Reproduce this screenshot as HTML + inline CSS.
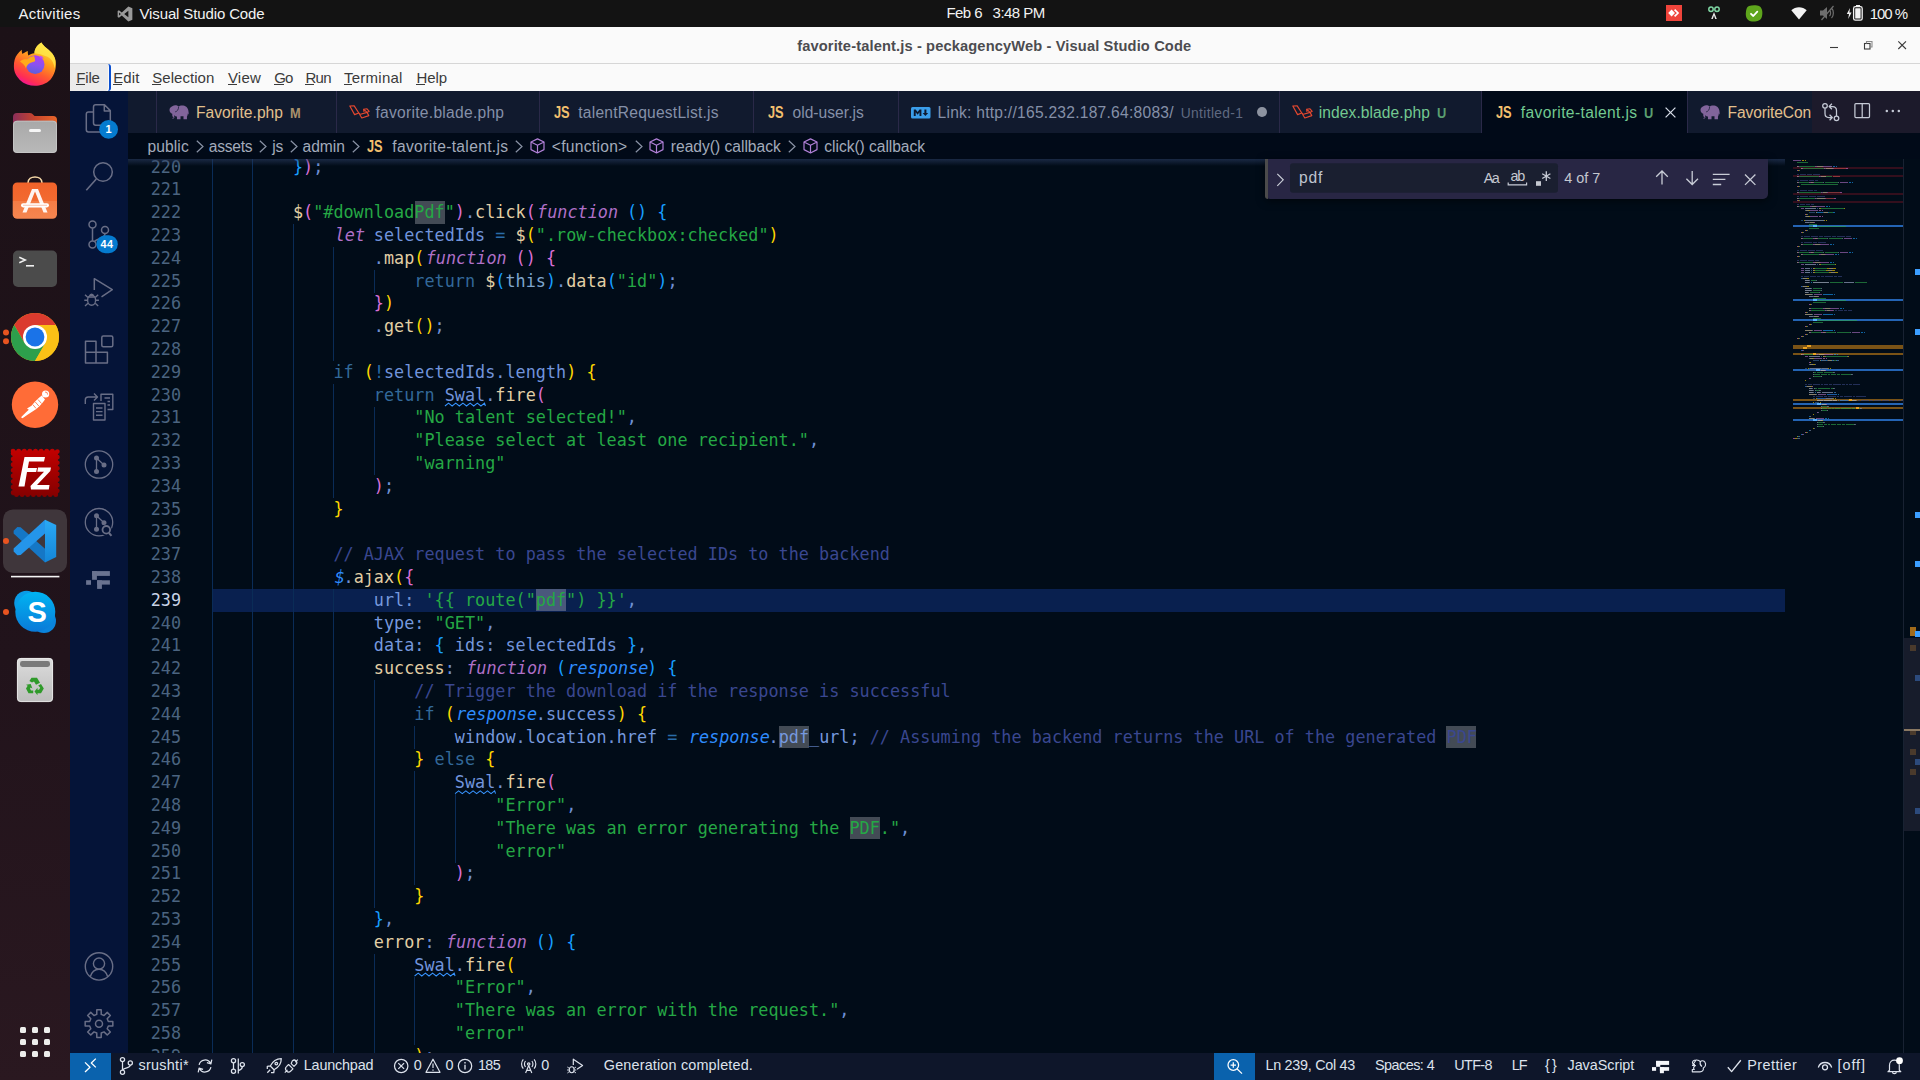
<!DOCTYPE html>
<html lang="en"><head><meta charset="utf-8"><title>favorite-talent.js - peckagencyWeb - Visual Studio Code</title>
<style>
html,body{margin:0;padding:0;background:#010a18;}
body{width:1920px;height:1080px;position:relative;overflow:hidden;font-family:"Liberation Sans",sans-serif;}
.t{position:absolute;white-space:pre;line-height:1;}
.ls{font-family:"Liberation Sans",sans-serif}
.dv{font-family:"DejaVu Sans",sans-serif}
.dm{font-family:"DejaVu Sans Mono",monospace}
svg{display:block;overflow:visible}

.ed{position:absolute;left:128px;top:159px;width:1792px;height:894px;overflow:hidden;background:#010c18}
.ln,.cl{position:absolute;height:22.8px;line-height:22.8px;font-family:"DejaVu Sans Mono",monospace;font-size:16.8px;white-space:pre}
.ln{left:0;width:53px;text-align:right;color:#4b6480}
.cl{left:83.95px;color:#7194dc;letter-spacing:0.0157px}
.k{color:#b070c8;font-style:italic;position:relative;left:1.3px}.c{color:#3a4790}.s{color:#25a845}.q{color:#25a845}.f{color:#e2cfa5}.r{color:#33699a}
.p{color:#6f90d4}.o{color:#2a6ca8}.v{color:#7194dc}.t{}.pa{color:#2f8cff;font-style:italic;position:relative;left:1.3px}.th{color:#7fa6cf}.w{color:#7699de}
.b1{color:#ffd700}.b2{color:#da70d6}.b3{color:#179fff}
.g{position:absolute;width:1px;background:#0a2c57}
.hl{position:absolute;height:22.8px}
</style></head>
<body>
<!-- p1_frame -->
<div style="position:absolute;left:0px;top:0px;width:1920px;height:27px;background:#131313;"></div>
<span id="t1" class="t ls" style="left:18.40px;top:6.00px;font-size:15px;color:#f2f2f2;letter-spacing:0.291px;">Activities</span>
<svg style="position:absolute;left:117px;top:5.5px" width="16" height="16" viewBox="0 0 100 100"><path fill="#9a9a9a" d="M71 3 L96 14 V86 L71 97 L30 59 L12 73 L4 69 V31 L12 27 L30 41 Z M71 30 L45 50 L71 70 Z M13 40 V60 L24 50 Z"/></svg>
<span id="t2" class="t ls" style="left:139.50px;top:6.00px;font-size:15px;color:#f2f2f2;letter-spacing:-0.128px;">Visual Studio Code</span>
<span id="t3" class="t ls" style="left:946.40px;top:5.00px;font-size:15px;color:#f2f2f2;letter-spacing:-0.532px;">Feb 6</span>
<span id="t4" class="t ls" style="left:992.60px;top:5.00px;font-size:15px;color:#f2f2f2;letter-spacing:-0.539px;">3:48 PM</span>
<svg style="position:absolute;left:1666px;top:5px" width="16" height="16" viewBox="0 0 16 16"><rect width="16" height="16" fill="#ef443b"/><path fill="#fff" d="M5.6 4.6 L9 8 L5.6 11.4 L2.2 8 Z"/><path fill="none" stroke="#fff" stroke-width="1.7" d="M8.6 4.6 L12 8 L8.6 11.4"/></svg>
<svg style="position:absolute;left:1706px;top:5px" width="16" height="16" viewBox="0 0 16 16"><circle cx="5" cy="4.3" r="2.2" fill="none" stroke="#7fd6a3" stroke-width="1.5"/><circle cx="11" cy="4.3" r="2.2" fill="none" stroke="#7fd6a3" stroke-width="1.5"/><path d="M8 7 L5.2 14 L6.8 14 L8 10.5 L9.2 14 L10.8 14 Z" fill="#e8e8e8"/></svg>
<svg style="position:absolute;left:1745px;top:4.5px" width="18" height="17" viewBox="0 0 18 17"><path fill="#5ea51c" d="M4 1 C7 0 12 0 14.5 1.2 C17.5 3 18 8 16.8 12 C15.5 16 11 17 7 16.5 C3 16 0.5 13 0.8 8.5 C1 5 1.5 2 4 1 Z"/><path fill="none" stroke="#fff" stroke-width="1.8" stroke-linecap="round" stroke-linejoin="round" d="M6 8.8 L8.3 11 L12.3 6.6"/></svg>
<svg style="position:absolute;left:1791px;top:6px" width="16" height="14" viewBox="0 0 16 14"><path fill="#f2f2f2" d="M8 13.5 L0.3 4.2 C4.5 0.2 11.5 0.2 15.7 4.2 Z"/></svg>
<svg style="position:absolute;left:1819px;top:5px" width="17" height="16" viewBox="0 0 17 16"><path fill="#6e6e6e" d="M1 5.5 H4 L8 2 V14 L4 10.5 H1 Z"/><path fill="none" stroke="#6e6e6e" stroke-width="1.2" d="M10.5 5 C12 6.5 12 9.5 10.5 11 M12.5 3 C15 5.5 15 10.5 12.5 13 M14.5 1 L2.5 15"/></svg>
<svg style="position:absolute;left:1846px;top:4px" width="18" height="18" viewBox="0 0 18 18"><path fill="#f2f2f2" d="M4 4 L0.8 10 H3 L2.2 15 L5.6 8.6 H3.4 Z"/><rect x="7.6" y="2.6" width="8.6" height="13.6" rx="1.8" fill="none" stroke="#f2f2f2" stroke-width="1.3"/><rect x="10" y="1" width="4" height="2" fill="#f2f2f2"/><rect x="9.2" y="4.2" width="5.4" height="10.4" rx="0.6" fill="#f2f2f2"/></svg>
<span id="t5" class="t ls" style="left:1869.70px;top:6.00px;font-size:15px;color:#f2f2f2;letter-spacing:-1.009px;">100 %</span>
<div style="position:absolute;left:0px;top:27px;width:70px;height:1053px;background:linear-gradient(180deg,#1c1117 0%,#21131b 60%,#2a1820 100%);"></div>
<div style="position:absolute;left:70px;top:27px;width:1850px;height:37px;background:#fafafa;border-bottom:1px solid #d6d6d6;box-sizing:border-box;"></div>
<span id="t6" class="t ls" style="left:797.20px;top:38.66px;font-size:14.67px;color:#4c4c50;font-weight:700;letter-spacing:0.127px;">favorite-talent.js - peckagencyWeb - Visual Studio Code</span>
<svg style="position:absolute;left:1826px;top:37px" width="90" height="18" viewBox="0 0 90 18"><g stroke="#3a3a3a" stroke-width="1.1" fill="none"><path d="M4 10.5 H12"/><rect x="38.5" y="6.5" width="5.5" height="5.5"/><path d="M40.5 6.5 V4.5 H46 V10 H44" stroke="#8a8a8a"/><path d="M72.3 4.3 L80 12 M80 4.3 L72.3 12"/></g></svg>
<div style="position:absolute;left:70px;top:64px;width:1850px;height:27px;background:#fafafa;"></div>
<div style="position:absolute;left:70px;top:64px;width:38px;height:27px;background:#ebebeb;border-radius:0 0 4px 0;"></div>
<div style="position:absolute;left:108px;top:64px;width:3px;height:27px;background:transparent;border-right:2.5px solid #0a4fd0;border-radius:0 6px 6px 0;box-sizing:border-box;"></div>
<span id="t7" class="t ls" style="left:76.30px;top:70.00px;font-size:15px;color:#3b3b3b;letter-spacing:-0.168px;">File</span>
<div style="position:absolute;left:76px;top:84px;width:8.6px;height:1px;background:#3b3b3b;"></div>
<span id="t8" class="t ls" style="left:113.30px;top:70.00px;font-size:15px;color:#3b3b3b;letter-spacing:0.060px;">Edit</span>
<div style="position:absolute;left:113px;top:84px;width:8.6px;height:1px;background:#3b3b3b;"></div>
<span id="t9" class="t ls" style="left:152.30px;top:70.00px;font-size:15px;color:#3b3b3b;letter-spacing:0.042px;">Selection</span>
<div style="position:absolute;left:152px;top:84px;width:8.6px;height:1px;background:#3b3b3b;"></div>
<span id="t10" class="t ls" style="left:227.90px;top:70.00px;font-size:15px;color:#3b3b3b;letter-spacing:0.212px;">View</span>
<div style="position:absolute;left:227.6px;top:84px;width:9.3px;height:1px;background:#3b3b3b;"></div>
<span id="t11" class="t ls" style="left:274.20px;top:70.00px;font-size:15px;color:#3b3b3b;letter-spacing:-0.958px;">Go</span>
<div style="position:absolute;left:273.9px;top:84px;width:10.5px;height:1px;background:#3b3b3b;"></div>
<span id="t12" class="t ls" style="left:305.40px;top:70.00px;font-size:15px;color:#3b3b3b;letter-spacing:-0.710px;">Run</span>
<div style="position:absolute;left:305.1px;top:84px;width:9.3px;height:1px;background:#3b3b3b;"></div>
<span id="t13" class="t ls" style="left:344.00px;top:70.00px;font-size:15px;color:#3b3b3b;letter-spacing:0.252px;">Terminal</span>
<div style="position:absolute;left:343.7px;top:84px;width:8.6px;height:1px;background:#3b3b3b;"></div>
<span id="t14" class="t ls" style="left:416.50px;top:70.00px;font-size:15px;color:#3b3b3b;letter-spacing:-0.065px;">Help</span>
<div style="position:absolute;left:416.2px;top:84px;width:8.6px;height:1px;background:#3b3b3b;"></div>
<!-- p2_dock -->
<svg style="position:absolute;left:0;top:27px" width="70" height="1053" viewBox="0 27 70 1053">
<defs>
<linearGradient id="ffg" x1="0.75" y1="0.1" x2="0.3" y2="1"><stop offset="0" stop-color="#ffe040"/><stop offset="0.3" stop-color="#ffa41c"/><stop offset="0.62" stop-color="#ff5a30"/><stop offset="0.85" stop-color="#ff2d55"/><stop offset="1" stop-color="#f0129a"/></linearGradient>
<linearGradient id="ffp" x1="0.6" y1="0" x2="0.4" y2="1"><stop offset="0" stop-color="#b43cf2"/><stop offset="0.5" stop-color="#8a52f0"/><stop offset="1" stop-color="#5a5fdc"/></linearGradient>
<linearGradient id="fold" x1="0" y1="0" x2="1" y2="0"><stop offset="0" stop-color="#8b2e5a"/><stop offset="0.5" stop-color="#c8452c"/><stop offset="1" stop-color="#e8662a"/></linearGradient>
<linearGradient id="foldg" x1="0" y1="0" x2="0" y2="1"><stop offset="0" stop-color="#a8a8a8"/><stop offset="1" stop-color="#b9b9b9"/></linearGradient>
<linearGradient id="sw" x1="0" y1="0" x2="0" y2="1"><stop offset="0" stop-color="#f1632a"/><stop offset="0.5" stop-color="#f26a30"/><stop offset="0.51" stop-color="#f37c45"/><stop offset="1" stop-color="#f58650"/></linearGradient>
<linearGradient id="fz" x1="0" y1="0" x2="0" y2="1"><stop offset="0" stop-color="#c00000"/><stop offset="1" stop-color="#860000"/></linearGradient>
<linearGradient id="sk" x1="0" y1="0" x2="0" y2="1"><stop offset="0" stop-color="#00b4f2"/><stop offset="1" stop-color="#0a7ad8"/></linearGradient>
<linearGradient id="tr" x1="0" y1="0" x2="0" y2="1"><stop offset="0" stop-color="#dcdcdc"/><stop offset="1" stop-color="#bdbdbd"/></linearGradient>
<linearGradient id="vs1" x1="0" y1="0" x2="0" y2="1"><stop offset="0" stop-color="#2aa9f5"/><stop offset="1" stop-color="#1486d8"/></linearGradient>
</defs>
<g><path fill="url(#ffg)" d="M41.400 42.500 C43 45 44.500 46.500 46.100 47.800 C48 49.300 49.800 50.800 51.100 52.200 C52.500 53.500 53.300 54.800 53.900 56.100 C55 58.200 55.800 60.500 55.800 62.800 C56 65.800 55.800 68.500 55 71.100 C54 74.300 52.600 77.200 50.600 79.400 C48.500 81.700 45.800 83.400 42.800 84.400 C40.300 85.300 37.600 85.800 35 85.800 C32.300 85.800 29.700 85.300 27.200 84.400 C24.200 83.300 21.500 81.700 19.400 79.400 C17.500 77.400 16 75.200 15 72.800 C14.200 70.700 13.900 68.400 13.900 66.100 C13.900 63.800 14.100 61.500 14.700 59.400 C15.300 57.500 16.100 55.900 17.200 54.400 C18.400 52.700 20 51.100 21.700 49.700 C21.600 51.200 21.900 52.600 22.500 53.900 C23 53.400 23.700 53 24.400 52.800 C25.400 52.100 26.600 51.500 27.800 51.100 C27.600 52.700 27.800 54.200 28.300 55.600 C30 54.300 32.200 53.600 34.400 53.300 C34.300 51.800 34.700 50.300 35.300 48.900 C35.900 47.600 36.800 46.400 37.800 45.300 C38.900 44.200 40.200 43.300 41.400 42.500 Z"/>
<path fill="#ffe94a" opacity="0.80" d="M41.400 42.500 C43 45 44.500 46.500 46.100 47.800 C48 49.300 49.800 50.800 51.100 52.200 C53 54 54.800 57 55.300 60.500 C55.600 63 55.300 66 54.300 68.500 C54.300 64 52.500 60.500 49.500 58 C47 56 43.500 55.500 41 54.500 C38.500 53.800 36 53.600 34.400 53.300 C34.300 51.800 34.700 50.300 35.300 48.900 C35.900 47.600 36.800 46.400 37.800 45.300 C38.900 44.200 40.200 43.300 41.400 42.500 Z"/>
<circle cx="35.200" cy="64.600" r="9.300" fill="url(#ffp)"/>
<path fill="#ffab1a" d="M20 61.300 C21.500 59.600 24.500 59 27.500 59.200 C29.500 57.500 31.500 56.400 34 56 C34.800 57.800 35.300 59.500 35 61.200 C33.500 61.800 31 62.300 29.200 63.500 C27.500 64.600 26.300 66.500 26 68.500 C25.200 66 23.500 64 22 63 C21.300 62.500 20.500 62 20 61.300 Z"/>
<path fill="#c24ff0" d="M39.500 55.500 C41.500 55.800 43 57 43.800 58.800 C42.800 58.200 41.500 58 40.300 58.200 C40.300 57.200 40 56.200 39.500 55.500 Z"/></g>
<g><path fill="url(#fold)" d="M13 117 Q13 113 17 113 H30 Q32 113 33.500 115 L34.500 116 H53 Q57 116 57 120 V140 H13 Z"/><rect x="13" y="120.700" width="44" height="32.300" rx="4" fill="url(#foldg)"/><rect x="13.500" y="121.200" width="43" height="31.300" rx="3.600" fill="none" stroke="#d0d0d0" stroke-width="0.800" opacity="0.700"/><rect x="29" y="129" width="12" height="3" rx="1.500" fill="#f6f6f6"/></g>
<g><path d="M28 183 C28 175 42 175 42 183" fill="none" stroke="#f6d9a8" stroke-width="1.600"/><rect x="12.700" y="182.500" width="44.300" height="36.300" rx="4.500" fill="url(#sw)"/><path fill="#fff" opacity="0.93" d="M32 189 H38 L47.500 212.500 H43.500 L35 191.500 L26.500 212.500 H22.500 Z"/><rect x="21" y="203.200" width="28" height="4.200" rx="2.100" fill="#fff"/><rect x="23" y="204.800" width="24" height="0.800" fill="#f7b59a"/></g>
<g><rect x="13" y="250.600" width="44" height="36.300" rx="5" fill="#4b4b4b"/><path d="M19.300 257.200 L25.300 260 L19.300 262.800" fill="none" stroke="#f0f0f0" stroke-width="1.500"/><rect x="26" y="265" width="8" height="1.600" fill="#f0f0f0"/></g>
<g transform="translate(35 337)"><circle r="24" fill="#fbc116"/><path fill="#db3b2e" d="M-20.780 -12 A24 24 0 0 1 20.780 -12 L0 -12 L-10.400 6 Z"/><path fill="#2d9f4c" d="M-20.780 -12 A24 24 0 0 0 0 24 L10.400 6 L-10.400 6 Z"/><path fill="#fbc116" d="M0 24 A24 24 0 0 0 20.780 -12 L0 -12 L10.400 6 Z"/><circle r="12" fill="#fff"/><circle r="9.400" fill="#1a73e8"/></g>
<circle cx="6" cy="332.400" r="3" fill="#e95420"/><circle cx="6" cy="341.200" r="3" fill="#e95420"/>
<g><circle cx="35" cy="404.700" r="23.200" fill="#ff6c37"/><g fill="#fff"><circle cx="45.600" cy="394" r="3.600"/><path d="M41.800 395.600 L45 399.400 C42 404 38 408 32.500 411.500 L27.500 414.800 L22.500 418.300 L21 417.200 L25.800 412.600 L28.800 409.800 L27 408.600 L31.500 405.800 C34.500 402 38 398.500 41.800 395.600 Z"/></g><path d="M38 399.500 L41.500 403.500 M35.300 402 L38.800 406 M32.800 404.600 L36 408.400" stroke="#ff6c37" stroke-width="0.800"/><path d="M45 392 A2.400 2.400 0 0 1 47.600 394.600" fill="none" stroke="#ff6c37" stroke-width="0.800"/></g>
<g><rect x="13" y="451" width="44.400" height="43.800" fill="none" stroke="url(#fz)" stroke-width="4.600" stroke-dasharray="0.100 5.510" stroke-linecap="round"/><rect x="12.500" y="450.500" width="45.400" height="44.800" fill="url(#fz)"/>
<path fill="#fff" d="M24.500 457 H45 L44 461.500 H29 L27.800 468 H37 L36.200 472 H27 L24.500 486.500 H18.500 Z"/><path fill="#fff" d="M38 467.500 H51 L50.300 471 L37 485 H49.500 L48.800 489.500 H31 L30.500 486 L44 471.800 H37.300 Z"/></g>
<rect x="3" y="509.400" width="64" height="63.500" rx="10" fill="#3f363b"/>
<g><path fill="#1577c6" d="M13.600 530.800 L17.400 527 L20.600 527.200 L45 548.800 L45 562.500 L13.600 533.600 Z"/><path fill="#2495ea" d="M45 519.700 L13.600 548.600 L13.600 551.400 L17.400 555.200 L20.600 555 L45 533.400 Z"/><path fill="url(#vs1)" d="M45 519.700 L56.200 525 V557 L45 562.500 Z"/></g>
<circle cx="6" cy="541" r="3" fill="#e95420"/>
<rect x="11" y="575.800" width="48.400" height="1.600" fill="#f4f4f4"/>
<g><circle cx="26.500" cy="603" r="12.300" fill="#0a9be6"/><circle cx="44" cy="621" r="12" fill="#0a84dc"/><circle cx="35.300" cy="611.800" r="20" fill="url(#sk)"/></g>
<circle cx="6" cy="612" r="3" fill="#e95420"/>
<g><rect x="17" y="658" width="36" height="44" rx="4" fill="url(#tr)"/><rect x="17.400" y="658.400" width="35.200" height="43.200" rx="3.700" fill="none" stroke="#ececec" stroke-width="0.800"/><rect x="20" y="661" width="30" height="6" rx="2.400" fill="#7a7a7a"/>
<g fill="#2f9a2a" transform="translate(35 686)"><path d="M-3.500 -8.300 L2 -8.300 L5 -3.300 L1 -1.200 L-1 -4.600 L-3 -3.400 L-5.600 -5 Z"/><path d="M6 -2 L8.800 2.600 L6 7.300 H2.500 V9.300 L-0.500 5.500 L2.500 1.700 V3.800 H4 L5.200 1.800 L3.200 -0.600 Z" /><path d="M-1.800 7.300 H-6.500 L-9 2.600 L-7.300 -0.300 L-9 -1.300 L-4.300 -2 L-2.600 2.400 L-4.300 1.400 L-5 2.600 L-4 4.400 H-1.800 Z"/></g></g>
<rect x="20" y="1027" width="6" height="6" rx="1.500" fill="#eeeeec"/>
<rect x="20" y="1039" width="6" height="6" rx="1.500" fill="#eeeeec"/>
<rect x="20" y="1051" width="6" height="6" rx="1.500" fill="#eeeeec"/>
<rect x="32" y="1027" width="6" height="6" rx="1.500" fill="#eeeeec"/>
<rect x="32" y="1039" width="6" height="6" rx="1.500" fill="#eeeeec"/>
<rect x="32" y="1051" width="6" height="6" rx="1.500" fill="#eeeeec"/>
<rect x="44" y="1027" width="6" height="6" rx="1.500" fill="#eeeeec"/>
<rect x="44" y="1039" width="6" height="6" rx="1.500" fill="#eeeeec"/>
<rect x="44" y="1051" width="6" height="6" rx="1.500" fill="#eeeeec"/>
</svg>
<span id="t15" class="t ls" style="left:27.40px;top:597.80px;font-size:29px;color:#fff;font-weight:700;">S</span>
<!-- p3_activity -->
<div style="position:absolute;left:70px;top:91px;width:58px;height:962px;background:#051438;"></div>
<svg style="position:absolute;left:70px;top:91px" width="58" height="962" viewBox="70 91 58 962" fill="none" stroke="#696e86" stroke-width="1.5" stroke-linejoin="round">
<path d="M93.500 119.500 V107 Q93.500 104.800 95.700 104.800 H104.500 L110.300 110.600 V123 Q110.300 125.200 108.100 125.200 H95.700 Q93.500 125.200 93.500 123 Z M104.300 105 V111 H110"/>
<path d="M93.500 112 H88.500 Q86.300 112 86.300 114.200 V129.800 Q86.300 132 88.500 132 H100 Q102 132 102.200 130 V125.400"/>
<circle cx="103" cy="172" r="9.300"/><path d="M96.300 179 L86.300 190.300" stroke-width="1.6"/>
<circle cx="92.500" cy="224.600" r="3.500"/><circle cx="105" cy="230" r="3.500"/><circle cx="92.500" cy="244.600" r="3.500"/><path d="M92.500 228.200 V241 M105 233.600 C105 239 97 238 94.500 241.500"/>
<path d="M94.300 290 V278.700 L112.300 289.600 L101.500 296.800"/>
<g stroke-width="1.400"><ellipse cx="91.600" cy="300.300" rx="4" ry="5"/><path d="M88.500 297 H94.700 M87.600 300.300 H84.300 M95.600 300.300 H98.900 M88 297.500 L85 294.800 M95.200 297.500 L98.200 294.800 M88 303.300 L85 306 M95.200 303.300 L98.200 306 M89.500 295.600 Q91.600 293 93.700 295.600"/></g>
<path d="M85.500 341.200 H96 V363 H85.500 Z M85.500 352.300 H107.400 V363 H96 M96 352.300"/><rect x="101.800" y="336" width="11" height="10.800" rx="1.500"/>
<g stroke-width="1.400"><path d="M93.500 403.500 H105 V420 H93.500 Z M96 408 H102.500 M96 411.600 H102.500 M96 415.200 H102.500" /><path d="M101 401 V394.300 H112.800 V409.500 H107.500 M104.500 398 H110 M107.500 401.500 H110 M107.500 405 H110"/><path d="M85.300 404 V400 Q85.300 397 88.300 397 H97 M94 393.500 L97.500 397 L94 400.500"/></g>
<circle cx="99" cy="464.5" r="13.700" stroke-width="1.300"/>
<g fill="#696e86" stroke="none"><circle cx="96.500" cy="458" r="2.500"/><circle cx="96.500" cy="471.5" r="2.500"/><circle cx="104" cy="465" r="2.500"/></g>
<path d="M96.500 458 V471.5 M96.500 458 L104 465" stroke-width="1.300"/>
<circle cx="99" cy="522.2" r="13.700" stroke-width="1.300"/>
<g fill="#696e86" stroke="none"><circle cx="96.500" cy="515.7" r="2.500"/><circle cx="96.500" cy="529.2" r="2.500"/><circle cx="104" cy="522.7" r="2.500"/></g>
<path d="M96.500 515.7 V529.2 M96.500 515.7 L104 522.7" stroke-width="1.300"/>
<circle cx="106.300" cy="530.200" r="5.600" fill="#051438" stroke="none"/><circle cx="106.300" cy="529.800" r="3.800" stroke-width="1.800"/><path d="M109 533 L111.500 535.800" stroke-width="2"/>
<g fill="#6a7390" stroke="none"><rect x="92.100" y="571.100" width="17.800" height="4.800"/><rect x="92.100" y="571.100" width="4.800" height="8.700"/><rect x="86.100" y="580.200" width="4.900" height="4.600"/><rect x="97.100" y="580.300" width="12.800" height="4.300"/><rect x="97.100" y="580.300" width="4.800" height="8.600"/></g>
<circle cx="99" cy="966.400" r="13.700" stroke-width="1.400"/><circle cx="99" cy="963.600" r="5.600" stroke-width="1.400"/><path d="M90.300 976.800 C92 971 96 969.300 99 969.300 C102 969.300 106 971 107.700 976.800" stroke-width="1.400"/>
<path d="M96.81 1009.87 L101.19 1009.87 L101.24 1014.37 L104.02 1015.51 L107.23 1012.37 L110.33 1015.47 L107.19 1018.68 L108.33 1021.46 L112.83 1021.51 L112.83 1025.89 L108.33 1025.94 L107.19 1028.72 L110.33 1031.93 L107.23 1035.03 L104.02 1031.89 L101.24 1033.03 L101.19 1037.53 L96.81 1037.53 L96.76 1033.03 L93.98 1031.89 L90.77 1035.03 L87.67 1031.93 L90.81 1028.72 L89.67 1025.94 L85.17 1025.89 L85.17 1021.51 L89.67 1021.46 L90.81 1018.68 L87.67 1015.47 L90.77 1012.37 L93.98 1015.51 L96.76 1014.37 Z" stroke-width="1.500"/><circle cx="99" cy="1023.700" r="3.500" stroke-width="1.500"/>
<g stroke="none"><circle cx="108.600" cy="129.400" r="9.400" fill="#057bcf"/><rect x="96.400" y="235.200" width="21.400" height="18" rx="9" fill="#057bcf"/></g>
</svg>
<span id="t16" class="t ls" style="left:105.60px;top:123.90px;font-size:11px;color:#fff;font-weight:700;letter-spacing:-0.325px;">1</span>
<span id="t17" class="t ls" style="left:100.60px;top:238.80px;font-size:10.8px;color:#fff;font-weight:700;letter-spacing:0.392px;">44</span>
<!-- p4_tabs -->
<div style="position:absolute;left:128px;top:91px;width:1792px;height:42px;background:#111a2e;"></div>
<div style="position:absolute;left:156px;top:91px;width:1px;height:42px;background:#2a2948;"></div>
<div style="position:absolute;left:336px;top:91px;width:1px;height:42px;background:#2a2948;"></div>
<div style="position:absolute;left:539px;top:91px;width:1px;height:42px;background:#2a2948;"></div>
<div style="position:absolute;left:753px;top:91px;width:1px;height:42px;background:#2a2948;"></div>
<div style="position:absolute;left:898px;top:91px;width:1px;height:42px;background:#2a2948;"></div>
<div style="position:absolute;left:1279px;top:91px;width:1px;height:42px;background:#2a2948;"></div>
<div style="position:absolute;left:1687px;top:91px;width:1px;height:42px;background:#2a2948;"></div>
<div style="position:absolute;left:1482px;top:91px;width:205px;height:42px;background:#010a18;"></div>
<div style="position:absolute;left:1481px;top:91px;width:1px;height:42px;background:#2a2948;"></div>
<svg style="position:absolute;left:168.7px;top:104.6px" width="20" height="14.500" viewBox="0 0 19.600 14.200"><path fill="#82649b" d="M3.200 1.200 C5.500 -0.300 8 0.200 9.300 1.500 C10 1 12 0.300 14 0.600 C17 1 19 3.500 19.200 7 C19.300 8 19.300 9 19 9.200 C18.700 9 18.600 8.600 18.500 8 C18.400 9.500 18 10.500 17.600 11.200 V14 H14.200 V11 H11.300 V14 H7.800 V11.300 C6.800 11.300 5.900 10.800 5.300 10 L4.900 11 C5.300 11.200 5.500 11.800 5.200 12.600 C4.900 13.300 4 13.700 3.300 13.200 L3.600 12.600 C4.100 12.800 4.500 12.500 4.500 12 C4.300 11.600 3.200 11.500 3.200 10 V8.600 C1.500 8 0.500 6.500 0.500 4.800 C0.500 3.300 1.500 2 3.200 1.200 Z M9.200 2.300 C8.800 4.500 7.500 6 5.500 6.500" stroke="#111a2e" stroke-width="0.0"/><path d="M9.400 1.800 C9.400 4.600 8 6.200 6 6.800" fill="none" stroke="#111a2e" stroke-width="0.700"/></svg>
<span id="t18" class="t ls" style="left:196.00px;top:104.70px;font-size:15.6px;color:#e2c08d;letter-spacing:0.026px;">Favorite.php</span>
<span id="t19" class="t ls" style="left:290.20px;top:105.70px;font-size:14.6px;color:#a8916c;font-weight:700;transform:scaleX(0.88);transform-origin:0 0;">M</span>
<svg style="position:absolute;left:348.6px;top:104.6px" width="21" height="14" viewBox="0 0 21 14" fill="none" stroke="#e5482f" stroke-width="1.150" stroke-linejoin="round"><path d="M0.800 1 L5.200 0.900 L9.800 8 L5.600 9.600 Z M5.600 9.600 L9.800 8 L11.200 9.300 M10.700 9.500 L18 7.400 L19.800 10.600 L12.800 13 Z M18 7.400 L14.600 4.200 L18 3.800 L20.200 6.300 L18 7.400 M14.600 4.200 L15 6.800"/></svg>
<span id="t20" class="t ls" style="left:375.50px;top:104.70px;font-size:15.6px;color:#8590a8;letter-spacing:0.268px;">favorite.blade.php</span>
<span id="t21" class="t ls" style="left:554.00px;top:104.00px;font-size:17.2px;color:#f3c06e;font-weight:700;transform:scaleX(0.745);transform-origin:0 0;">JS</span>
<span id="t22" class="t ls" style="left:578.30px;top:104.70px;font-size:15.6px;color:#8590a8;letter-spacing:0.220px;">talentRequestList.js</span>
<span id="t23" class="t ls" style="left:767.70px;top:104.00px;font-size:17.2px;color:#f3c06e;font-weight:700;transform:scaleX(0.745);transform-origin:0 0;">JS</span>
<span id="t24" class="t ls" style="left:792.50px;top:104.70px;font-size:15.6px;color:#8590a8;letter-spacing:0.020px;">old-user.js</span>
<svg style="position:absolute;left:910.700px;top:106.500px" width="19.500" height="11.500" viewBox="0 0 19.500 11.500"><rect width="19.500" height="11.500" rx="1.500" fill="#3b9eea"/><path fill="#0e1a30" d="M2.800 8.900 V2.600 H4.700 L6.600 5 L8.500 2.600 H10.400 V8.900 H8.500 V5.300 L6.600 7.700 L4.700 5.300 V8.900 Z M14.400 9 L11.600 5.900 H13.400 V2.600 H15.400 V5.900 H17.200 Z"/></svg>
<span id="t25" class="t ls" style="left:937.50px;top:104.70px;font-size:15.6px;color:#8590a8;letter-spacing:0.251px;">Link: http://165.232.187.64:8083/</span>
<span id="t26" class="t ls" style="left:1180.80px;top:106.60px;font-size:13.8px;color:#5f6980;letter-spacing:0.344px;">Untitled-1</span>
<div style="position:absolute;left:1257px;top:106.800px;width:9.800px;height:9.800px;border-radius:50%;background:#8d93a0"></div>
<svg style="position:absolute;left:1291.6px;top:104.6px" width="21" height="14" viewBox="0 0 21 14" fill="none" stroke="#e5482f" stroke-width="1.150" stroke-linejoin="round"><path d="M0.800 1 L5.200 0.900 L9.800 8 L5.600 9.600 Z M5.600 9.600 L9.800 8 L11.200 9.300 M10.700 9.500 L18 7.400 L19.800 10.600 L12.800 13 Z M18 7.400 L14.600 4.200 L18 3.800 L20.200 6.300 L18 7.400 M14.600 4.200 L15 6.800"/></svg>
<span id="t27" class="t ls" style="left:1318.80px;top:104.70px;font-size:15.6px;color:#73c991;letter-spacing:0.072px;">index.blade.php</span>
<span id="t28" class="t ls" style="left:1437.40px;top:105.70px;font-size:14.6px;color:#5a9f70;font-weight:700;transform:scaleX(0.88);transform-origin:0 0;">U</span>
<span id="t29" class="t ls" style="left:1496.00px;top:104.00px;font-size:17.2px;color:#f3c06e;font-weight:700;transform:scaleX(0.745);transform-origin:0 0;">JS</span>
<span id="t30" class="t ls" style="left:1520.80px;top:104.70px;font-size:15.6px;color:#73c991;letter-spacing:0.368px;">favorite-talent.js</span>
<span id="t31" class="t ls" style="left:1643.70px;top:105.70px;font-size:14.6px;color:#5a9f70;font-weight:700;transform:scaleX(0.88);transform-origin:0 0;">U</span>
<svg style="position:absolute;left:1665px;top:106.500px" width="11" height="11" viewBox="0 0 11 11" fill="none" stroke="#d8dee9" stroke-width="1.250"><path d="M0.600 0.600 L10.400 10.400 M10.400 0.600 L0.600 10.400"/></svg>
<svg style="position:absolute;left:1699.7px;top:104.6px" width="20" height="14.500" viewBox="0 0 19.600 14.200"><path fill="#82649b" d="M3.200 1.200 C5.500 -0.300 8 0.200 9.300 1.500 C10 1 12 0.300 14 0.600 C17 1 19 3.500 19.200 7 C19.300 8 19.300 9 19 9.200 C18.700 9 18.600 8.600 18.500 8 C18.400 9.500 18 10.500 17.600 11.200 V14 H14.200 V11 H11.300 V14 H7.800 V11.300 C6.800 11.300 5.900 10.800 5.300 10 L4.900 11 C5.300 11.200 5.500 11.800 5.200 12.600 C4.900 13.300 4 13.700 3.300 13.200 L3.600 12.600 C4.100 12.800 4.500 12.500 4.500 12 C4.300 11.600 3.200 11.500 3.200 10 V8.600 C1.500 8 0.500 6.500 0.500 4.800 C0.500 3.300 1.500 2 3.200 1.200 Z M9.200 2.300 C8.800 4.500 7.500 6 5.500 6.500" stroke="#111a2e" stroke-width="0.0"/><path d="M9.400 1.800 C9.400 4.600 8 6.200 6 6.800" fill="none" stroke="#111a2e" stroke-width="0.700"/></svg>
<div style="position:absolute;left:1727.500px;top:91px;width:83.400px;height:42px;overflow:hidden"><span id="t32" class="t ls" style="left:0.00px;top:13.70px;font-size:15.6px;color:#e2c08d;letter-spacing:-0.122px;visibility:hidden;">FavoriteCon</span><span id="t33" class="t ls" style="left:0.00px;top:13.70px;font-size:15.6px;color:#e2c08d;letter-spacing:-0.122px;">FavoriteController.php</span></div>
<div style="position:absolute;left:1812px;top:91px;width:108px;height:42px;background:#1c1a2b;"></div>
<svg style="position:absolute;left:1820px;top:101px" width="84" height="22" viewBox="1820 101 84 22" fill="none" stroke="#c5cad6" stroke-width="1.250" stroke-linejoin="round"><circle cx="1825" cy="105.800" r="2.300"/><circle cx="1836.500" cy="118.300" r="2.300"/><path d="M1825 108.200 V113.500 Q1825 117.500 1829 117.500 H1832 M1829.600 114.800 L1832.300 117.500 L1829.600 120.200"/><path d="M1836.500 116 V110.500 Q1836.500 106.500 1832.500 106.500 H1829.500 M1831.900 103.800 L1829.200 106.500 L1831.900 109.200"/><rect x="1854.900" y="103.600" width="14.600" height="14" rx="1"/><path d="M1862.200 103.600 V117.600"/><g fill="#c5cad6" stroke="none"><circle cx="1886.800" cy="111" r="1.250"/><circle cx="1892.800" cy="111" r="1.250"/><circle cx="1898.800" cy="111" r="1.250"/></g></svg>
<div style="position:absolute;left:128px;top:133px;width:1792px;height:26px;background:#010a18;"></div>
<span id="t34" class="t ls" style="left:147.50px;top:138.70px;font-size:15.6px;color:#a3abbb;letter-spacing:0.092px;">public</span>
<svg style="position:absolute;left:195.8px;top:140.2px" width="8" height="13" viewBox="0 0 8 13" fill="none" stroke="#8a93a6" stroke-width="1.200"><path d="M0.800 0.800 L7 6.500 L0.800 12.200"/></svg>
<span id="t35" class="t ls" style="left:208.80px;top:138.70px;font-size:15.6px;color:#a3abbb;letter-spacing:-0.263px;">assets</span>
<svg style="position:absolute;left:259px;top:140.2px" width="8" height="13" viewBox="0 0 8 13" fill="none" stroke="#8a93a6" stroke-width="1.200"><path d="M0.800 0.800 L7 6.500 L0.800 12.200"/></svg>
<span id="t36" class="t ls" style="left:272.30px;top:138.70px;font-size:15.6px;color:#a3abbb;letter-spacing:-0.283px;">js</span>
<svg style="position:absolute;left:289.6px;top:140.2px" width="8" height="13" viewBox="0 0 8 13" fill="none" stroke="#8a93a6" stroke-width="1.200"><path d="M0.800 0.800 L7 6.500 L0.800 12.200"/></svg>
<span id="t37" class="t ls" style="left:302.50px;top:138.70px;font-size:15.6px;color:#a3abbb;letter-spacing:0.003px;">admin</span>
<svg style="position:absolute;left:352px;top:140.2px" width="8" height="13" viewBox="0 0 8 13" fill="none" stroke="#8a93a6" stroke-width="1.200"><path d="M0.800 0.800 L7 6.500 L0.800 12.200"/></svg>
<span id="t38" class="t ls" style="left:367.00px;top:137.80px;font-size:17.2px;color:#f3c06e;font-weight:700;transform:scaleX(0.745);transform-origin:0 0;">JS</span>
<span id="t39" class="t ls" style="left:392.30px;top:138.70px;font-size:15.6px;color:#a3abbb;letter-spacing:0.340px;">favorite-talent.js</span>
<svg style="position:absolute;left:515.2px;top:140.2px" width="8" height="13" viewBox="0 0 8 13" fill="none" stroke="#8a93a6" stroke-width="1.200"><path d="M0.800 0.800 L7 6.500 L0.800 12.200"/></svg>
<svg style="position:absolute;left:530.3px;top:138px" width="15" height="16" viewBox="0 0 15 16" fill="none" stroke="#b180d7" stroke-width="1.200" stroke-linejoin="round"><path d="M7.500 0.900 L14 4 V11.600 L7.500 15 L1 11.600 V4 Z M1 4 L7.500 7.300 L14 4 M7.500 7.300 V15"/></svg>
<span id="t40" class="t ls" style="left:551.80px;top:138.70px;font-size:15.6px;color:#a3abbb;letter-spacing:0.286px;">&lt;function&gt;</span>
<svg style="position:absolute;left:634.8px;top:140.2px" width="8" height="13" viewBox="0 0 8 13" fill="none" stroke="#8a93a6" stroke-width="1.200"><path d="M0.800 0.800 L7 6.500 L0.800 12.200"/></svg>
<svg style="position:absolute;left:649.3px;top:138px" width="15" height="16" viewBox="0 0 15 16" fill="none" stroke="#b180d7" stroke-width="1.200" stroke-linejoin="round"><path d="M7.500 0.900 L14 4 V11.600 L7.500 15 L1 11.600 V4 Z M1 4 L7.500 7.300 L14 4 M7.500 7.300 V15"/></svg>
<span id="t41" class="t ls" style="left:670.80px;top:138.70px;font-size:15.6px;color:#a3abbb;letter-spacing:-0.004px;">ready() callback</span>
<svg style="position:absolute;left:787.8px;top:140.2px" width="8" height="13" viewBox="0 0 8 13" fill="none" stroke="#8a93a6" stroke-width="1.200"><path d="M0.800 0.800 L7 6.500 L0.800 12.200"/></svg>
<svg style="position:absolute;left:802.8px;top:138px" width="15" height="16" viewBox="0 0 15 16" fill="none" stroke="#b180d7" stroke-width="1.200" stroke-linejoin="round"><path d="M7.500 0.900 L14 4 V11.600 L7.500 15 L1 11.600 V4 Z M1 4 L7.500 7.300 L14 4 M7.500 7.300 V15"/></svg>
<span id="t42" class="t ls" style="left:824.30px;top:138.70px;font-size:15.6px;color:#a3abbb;letter-spacing:-0.042px;">click() callback</span>
<!-- p5_code -->
<div class="ed">
<div class="hl" style="left:84.3px;top:430px;width:1572.7px;background:#09204f"></div>
<div class="hl" style="left:286.69px;top:42.4px;width:30.04px;height:22.4px;background:#434b55"></div>
<div class="hl" style="left:408.06px;top:430px;width:30.04px;height:22.4px;background:#4a587c"></div>
<div class="hl" style="left:650.81px;top:566.8px;width:30.04px;height:22.4px;background:#434b55"></div>
<div class="hl" style="left:1318.37px;top:566.8px;width:30.04px;height:22.4px;background:#434b55"></div>
<div class="hl" style="left:721.61px;top:658px;width:30.04px;height:22.4px;background:#434b55"></div>
<div class="g" style="left:84px;top:-3.2px;height:912px"></div>
<div class="g" style="left:124px;top:-3.2px;height:912px"></div>
<div class="g" style="left:165px;top:65.2px;height:843.6px"></div>
<div class="g" style="left:205px;top:88px;height:114px"></div>
<div class="g" style="left:205px;top:224.8px;height:114px"></div>
<div class="g" style="left:205px;top:430px;height:478.8px"></div>
<div class="g" style="left:246px;top:110.8px;height:22.8px"></div>
<div class="g" style="left:246px;top:247.6px;height:68.4px"></div>
<div class="g" style="left:246px;top:521.2px;height:228px"></div>
<div class="g" style="left:246px;top:794.8px;height:114px"></div>
<div class="g" style="left:286px;top:566.8px;height:22.8px"></div>
<div class="g" style="left:286px;top:612.4px;height:114px"></div>
<div class="g" style="left:286px;top:817.6px;height:68.4px"></div>
<div class="g" style="left:327px;top:635.2px;height:68.4px"></div>
<div class="ln" style="top:-3.2px">220</div>
<div class="cl" style="top:-3.2px">        <span class="b3">}</span><span class="b2">)</span><span class="p">;</span></div>
<div class="ln" style="top:19px">221</div>
<div class="ln" style="top:42.4px">222</div>
<div class="cl" style="top:42.4px">        <span class="f">$</span><span class="b2">(</span><span class="q">"</span><span class="s">#downloadPdf</span><span class="q">"</span><span class="b2">)</span><span class="p">.</span><span class="f">click</span><span class="b2">(</span><span class="k">function</span> <span class="b3">()</span> <span class="b3">{</span></div>
<div class="ln" style="top:65.2px">223</div>
<div class="cl" style="top:65.2px">            <span class="k">let</span> <span class="v">selectedIds</span> <span class="o">=</span> <span class="f">$</span><span class="b1">(</span><span class="q">"</span><span class="s">.row-checkbox:checked</span><span class="q">"</span><span class="b1">)</span></div>
<div class="ln" style="top:88px">224</div>
<div class="cl" style="top:88px">                <span class="p">.</span><span class="f">map</span><span class="b1">(</span><span class="k">function</span> <span class="b2">()</span> <span class="b2">{</span></div>
<div class="ln" style="top:110.8px">225</div>
<div class="cl" style="top:110.8px">                    <span class="r">return</span> <span class="f">$</span><span class="b3">(</span><span class="th">this</span><span class="b3">)</span><span class="p">.</span><span class="f">data</span><span class="b3">(</span><span class="q">"</span><span class="s">id</span><span class="q">"</span><span class="b3">)</span><span class="p">;</span></div>
<div class="ln" style="top:133px">226</div>
<div class="cl" style="top:133px">                <span class="b2">}</span><span class="b1">)</span></div>
<div class="ln" style="top:156.4px">227</div>
<div class="cl" style="top:156.4px">                <span class="p">.</span><span class="f">get</span><span class="b1">()</span><span class="p">;</span></div>
<div class="ln" style="top:179.2px">228</div>
<div class="ln" style="top:202px">229</div>
<div class="cl" style="top:202px">            <span class="r">if</span> <span class="b1">(</span><span class="o">!</span><span class="v">selectedIds</span><span class="p">.</span><span class="v">length</span><span class="b1">)</span> <span class="b1">{</span></div>
<div class="ln" style="top:224.8px">230</div>
<div class="cl" style="top:224.8px">                <span class="r">return</span> <span class="v">Swal</span><span class="p">.</span><span class="f">fire</span><span class="b2">(</span></div>
<div class="ln" style="top:247px">231</div>
<div class="cl" style="top:247px">                    <span class="q">"</span><span class="s">No talent selected!</span><span class="q">"</span><span class="p">,</span></div>
<div class="ln" style="top:270.4px">232</div>
<div class="cl" style="top:270.4px">                    <span class="q">"</span><span class="s">Please select at least one recipient.</span><span class="q">"</span><span class="p">,</span></div>
<div class="ln" style="top:293.2px">233</div>
<div class="cl" style="top:293.2px">                    <span class="q">"</span><span class="s">warning</span><span class="q">"</span></div>
<div class="ln" style="top:316px">234</div>
<div class="cl" style="top:316px">                <span class="b2">)</span><span class="p">;</span></div>
<div class="ln" style="top:338.8px">235</div>
<div class="cl" style="top:338.8px">            <span class="b1">}</span></div>
<div class="ln" style="top:361px">236</div>
<div class="ln" style="top:384.4px">237</div>
<div class="cl" style="top:384.4px">            <span class="c">// AJAX request to pass the selected IDs to the backend</span></div>
<div class="ln" style="top:407.2px">238</div>
<div class="cl" style="top:407.2px">            <span class="pa">$</span><span class="p">.</span><span class="f">ajax</span><span class="b1">(</span><span class="b2">{</span></div>
<div class="ln" style="top:430px;color:#c8d3e6">239</div>
<div class="cl" style="top:430px">                <span class="w">url</span><span class="p">:</span> <span class="q">'</span><span class="s">{{ route("pdf") }}</span><span class="q">'</span><span class="p">,</span></div>
<div class="ln" style="top:452.8px">240</div>
<div class="cl" style="top:452.8px">                <span class="w">type</span><span class="p">:</span> <span class="q">"</span><span class="s">GET</span><span class="q">"</span><span class="p">,</span></div>
<div class="ln" style="top:475px">241</div>
<div class="cl" style="top:475px">                <span class="w">data</span><span class="p">:</span> <span class="b3">{</span> <span class="w">ids</span><span class="p">:</span> <span class="v">selectedIds</span> <span class="b3">}</span><span class="p">,</span></div>
<div class="ln" style="top:498.4px">242</div>
<div class="cl" style="top:498.4px">                <span class="f">success</span><span class="p">:</span> <span class="k">function</span> <span class="b3">(</span><span class="pa">response</span><span class="b3">)</span> <span class="b3">{</span></div>
<div class="ln" style="top:521.2px">243</div>
<div class="cl" style="top:521.2px">                    <span class="c">// Trigger the download if the response is successful</span></div>
<div class="ln" style="top:544px">244</div>
<div class="cl" style="top:544px">                    <span class="r">if</span> <span class="b1">(</span><span class="pa">response</span><span class="p">.</span><span class="v">success</span><span class="b1">)</span> <span class="b1">{</span></div>
<div class="ln" style="top:566.8px">245</div>
<div class="cl" style="top:566.8px">                        <span class="w">window</span><span class="p">.</span><span class="w">location</span><span class="p">.</span><span class="w">href</span> <span class="o">=</span> <span class="pa">response</span><span class="p">.</span><span class="w">pdf_url</span><span class="p">;</span> <span class="c">// Assuming the backend returns the URL of the generated PDF</span></div>
<div class="ln" style="top:589px">246</div>
<div class="cl" style="top:589px">                    <span class="b1">}</span> <span class="r">else</span> <span class="b1">{</span></div>
<div class="ln" style="top:612.4px">247</div>
<div class="cl" style="top:612.4px">                        <span class="v">Swal</span><span class="p">.</span><span class="f">fire</span><span class="b2">(</span></div>
<div class="ln" style="top:635.2px">248</div>
<div class="cl" style="top:635.2px">                            <span class="q">"</span><span class="s">Error</span><span class="q">"</span><span class="p">,</span></div>
<div class="ln" style="top:658px">249</div>
<div class="cl" style="top:658px">                            <span class="q">"</span><span class="s">There was an error generating the PDF.</span><span class="q">"</span><span class="p">,</span></div>
<div class="ln" style="top:680.8px">250</div>
<div class="cl" style="top:680.8px">                            <span class="q">"</span><span class="s">error</span><span class="q">"</span></div>
<div class="ln" style="top:703px">251</div>
<div class="cl" style="top:703px">                        <span class="b2">)</span><span class="p">;</span></div>
<div class="ln" style="top:726.4px">252</div>
<div class="cl" style="top:726.4px">                    <span class="b1">}</span></div>
<div class="ln" style="top:749.2px">253</div>
<div class="cl" style="top:749.2px">                <span class="b3">}</span><span class="p">,</span></div>
<div class="ln" style="top:772px">254</div>
<div class="cl" style="top:772px">                <span class="f">error</span><span class="p">:</span> <span class="k">function</span> <span class="b3">()</span> <span class="b3">{</span></div>
<div class="ln" style="top:794.8px">255</div>
<div class="cl" style="top:794.8px">                    <span class="v">Swal</span><span class="p">.</span><span class="f">fire</span><span class="b1">(</span></div>
<div class="ln" style="top:817px">256</div>
<div class="cl" style="top:817px">                        <span class="q">"</span><span class="s">Error</span><span class="q">"</span><span class="p">,</span></div>
<div class="ln" style="top:840.4px">257</div>
<div class="cl" style="top:840.4px">                        <span class="q">"</span><span class="s">There was an error with the request.</span><span class="q">"</span><span class="p">,</span></div>
<div class="ln" style="top:863.2px">258</div>
<div class="cl" style="top:863.2px">                        <span class="q">"</span><span class="s">error</span><span class="q">"</span></div>
<div class="ln" style="top:886px">259</div>
<div class="cl" style="top:886px">                    <span class="b1">)</span><span class="p">;</span></div>
<svg style="position:absolute;left:0;top:0" width="1" height="1"><path d="M316.93 247.00 L320.53 244.20 L324.13 247.00 L327.73 244.20 L331.33 247.00 L334.93 244.20 L338.53 247.00 L342.13 244.20 L345.73 247.00 L349.33 244.20 L352.93 247.00 L356.53 244.20 L357.39 247.00" fill="none" stroke="#3794ff" stroke-width="1.050"/></svg>
<svg style="position:absolute;left:0;top:0" width="1" height="1"><path d="M327.05 634.60 L330.65 631.80 L334.25 634.60 L337.85 631.80 L341.45 634.60 L345.05 631.80 L348.65 634.60 L352.25 631.80 L355.85 634.60 L359.45 631.80 L363.05 634.60 L366.65 631.80 L367.51 634.60" fill="none" stroke="#3794ff" stroke-width="1.050"/></svg>
<svg style="position:absolute;left:0;top:0" width="1" height="1"><path d="M286.59 817.00 L290.19 814.20 L293.79 817.00 L297.39 814.20 L300.99 817.00 L304.59 814.20 L308.19 817.00 L311.79 814.20 L315.39 817.00 L318.99 814.20 L322.59 817.00 L326.19 814.20 L327.05 817.00" fill="none" stroke="#3794ff" stroke-width="1.050"/></svg>
<div style="position:absolute;left:0;top:0;width:1657px;height:7px;background:linear-gradient(180deg,rgba(44,62,100,.58),rgba(44,62,100,0))"></div>
</div>
<!-- p6_widgets -->
<svg style="position:absolute;left:1786px;top:159px" width="134" height="894" viewBox="1786 159 134 894" shape-rendering="crispEdges">
<rect x="1793" y="167" width="110" height="2" fill="#3a0f1e" opacity="0.9"/>
<rect x="1793" y="175" width="110" height="2" fill="#3a0f1e" opacity="0.9"/>
<rect x="1793" y="193" width="110" height="2" fill="#3a0f1e" opacity="0.9"/>
<rect x="1793" y="201" width="110" height="2" fill="#3a0f1e" opacity="0.9"/>
<rect x="1793" y="225" width="110" height="2" fill="#2464b4"/>
<rect x="1793" y="299" width="110" height="2" fill="#2464b4"/>
<rect x="1793" y="319" width="110" height="2" fill="#2464b4"/>
<rect x="1793" y="369" width="110" height="2" fill="#2464b4"/>
<rect x="1793" y="403" width="110" height="2" fill="#2464b4"/>
<rect x="1793" y="419" width="110" height="2" fill="#2464b4"/>
<rect x="1793" y="345" width="110" height="4" fill="#7a5316"/>
<rect x="1793" y="353" width="110" height="2" fill="#7a5316"/>
<rect x="1793" y="399" width="110" height="2" fill="#7a5316"/>
<rect x="1793" y="407" width="110" height="2" fill="#7a5316"/>
<g opacity="0.6">
<rect x="1793" y="160.0" width="8" height="1" fill="#b070c8"/>
<rect x="1802" y="160.0" width="2" height="1" fill="#ffd700"/>
<rect x="1805" y="160.0" width="1" height="1" fill="#ffd700"/>
<rect x="1797" y="162.0" width="11" height="1" fill="#2fa84a"/>
<rect x="1797" y="166.0" width="1" height="1" fill="#e2cfa5"/>
<rect x="1798" y="166.0" width="1" height="1" fill="#da70d6"/>
<rect x="1799" y="166.0" width="16" height="1" fill="#2fa84a"/>
<rect x="1815" y="166.0" width="2" height="1" fill="#da70d6"/>
<rect x="1817" y="166.0" width="6" height="1" fill="#e2cfa5"/>
<rect x="1823" y="166.0" width="1" height="1" fill="#da70d6"/>
<rect x="1824" y="166.0" width="8" height="1" fill="#b070c8"/>
<rect x="1833" y="166.0" width="2" height="1" fill="#179fff"/>
<rect x="1836" y="166.0" width="1" height="1" fill="#179fff"/>
<rect x="1801" y="168.0" width="1" height="1" fill="#e2cfa5"/>
<rect x="1802" y="168.0" width="1" height="1" fill="#da70d6"/>
<rect x="1803" y="168.0" width="21" height="1" fill="#2fa84a"/>
<rect x="1824" y="168.0" width="1" height="1" fill="#da70d6"/>
<rect x="1825" y="168.0" width="1" height="1" fill="#8494b0"/>
<rect x="1826" y="168.0" width="7" height="1" fill="#e2cfa5"/>
<rect x="1833" y="168.0" width="1" height="1" fill="#da70d6"/>
<rect x="1834" y="168.0" width="12" height="1" fill="#d05050"/>
<rect x="1846" y="168.0" width="2" height="1" fill="#da70d6"/>
<rect x="1797" y="170.0" width="1" height="1" fill="#da70d6"/>
<rect x="1798" y="170.0" width="1" height="1" fill="#ffd700"/>
<rect x="1799" y="170.0" width="1" height="1" fill="#8494b0"/>
<rect x="1797" y="174.0" width="2" height="1" fill="#3b4783"/>
<rect x="1800" y="174.0" width="6" height="1" fill="#3b4783"/>
<rect x="1807" y="174.0" width="5" height="1" fill="#3b4783"/>
<rect x="1813" y="174.0" width="7" height="1" fill="#3b4783"/>
<rect x="1797" y="176.0" width="1" height="1" fill="#e2cfa5"/>
<rect x="1798" y="176.0" width="1" height="1" fill="#da70d6"/>
<rect x="1799" y="176.0" width="20" height="1" fill="#2fa84a"/>
<rect x="1819" y="176.0" width="1" height="1" fill="#da70d6"/>
<rect x="1820" y="176.0" width="1" height="1" fill="#8494b0"/>
<rect x="1821" y="176.0" width="5" height="1" fill="#e2cfa5"/>
<rect x="1826" y="176.0" width="6" height="1" fill="#2fa84a"/>
<rect x="1833" y="176.0" width="7" height="1" fill="#d05050"/>
<rect x="1797" y="180.0" width="2" height="1" fill="#3b4783"/>
<rect x="1800" y="180.0" width="8" height="1" fill="#3b4783"/>
<rect x="1809" y="180.0" width="5" height="1" fill="#3b4783"/>
<rect x="1815" y="180.0" width="3" height="1" fill="#3b4783"/>
<rect x="1797" y="182.0" width="1" height="1" fill="#e2cfa5"/>
<rect x="1798" y="182.0" width="1" height="1" fill="#da70d6"/>
<rect x="1799" y="182.0" width="10" height="1" fill="#2fa84a"/>
<rect x="1809" y="182.0" width="2" height="1" fill="#da70d6"/>
<rect x="1811" y="182.0" width="2" height="1" fill="#e2cfa5"/>
<rect x="1813" y="182.0" width="1" height="1" fill="#da70d6"/>
<rect x="1814" y="182.0" width="9" height="1" fill="#2fa84a"/>
<rect x="1823" y="182.0" width="1" height="1" fill="#8494b0"/>
<rect x="1825" y="182.0" width="13" height="1" fill="#2fa84a"/>
<rect x="1838" y="182.0" width="1" height="1" fill="#8494b0"/>
<rect x="1840" y="182.0" width="8" height="1" fill="#b070c8"/>
<rect x="1849" y="182.0" width="2" height="1" fill="#179fff"/>
<rect x="1852" y="182.0" width="1" height="1" fill="#179fff"/>
<rect x="1801" y="184.0" width="37" height="1" fill="#2fa84a"/>
<rect x="1797" y="186.0" width="1" height="1" fill="#da70d6"/>
<rect x="1798" y="186.0" width="1" height="1" fill="#ffd700"/>
<rect x="1799" y="186.0" width="1" height="1" fill="#8494b0"/>
<rect x="1797" y="190.0" width="2" height="1" fill="#3b4783"/>
<rect x="1800" y="190.0" width="7" height="1" fill="#3b4783"/>
<rect x="1808" y="190.0" width="5" height="1" fill="#3b4783"/>
<rect x="1814" y="190.0" width="3" height="1" fill="#3b4783"/>
<rect x="1797" y="192.0" width="1" height="1" fill="#e2cfa5"/>
<rect x="1798" y="192.0" width="1" height="1" fill="#da70d6"/>
<rect x="1799" y="192.0" width="22" height="1" fill="#2fa84a"/>
<rect x="1821" y="192.0" width="1" height="1" fill="#da70d6"/>
<rect x="1822" y="192.0" width="1" height="1" fill="#8494b0"/>
<rect x="1823" y="192.0" width="4" height="1" fill="#e2cfa5"/>
<rect x="1827" y="192.0" width="1" height="1" fill="#da70d6"/>
<rect x="1828" y="192.0" width="12" height="1" fill="#d05050"/>
<rect x="1840" y="192.0" width="2" height="1" fill="#da70d6"/>
<rect x="1797" y="196.0" width="2" height="1" fill="#3b4783"/>
<rect x="1800" y="196.0" width="8" height="1" fill="#3b4783"/>
<rect x="1809" y="196.0" width="7" height="1" fill="#3b4783"/>
<rect x="1817" y="196.0" width="8" height="1" fill="#3b4783"/>
<rect x="1797" y="198.0" width="1" height="1" fill="#e2cfa5"/>
<rect x="1798" y="198.0" width="1" height="1" fill="#da70d6"/>
<rect x="1799" y="198.0" width="16" height="1" fill="#2fa84a"/>
<rect x="1815" y="198.0" width="1" height="1" fill="#da70d6"/>
<rect x="1816" y="198.0" width="1" height="1" fill="#8494b0"/>
<rect x="1817" y="198.0" width="8" height="1" fill="#e2cfa5"/>
<rect x="1825" y="198.0" width="1" height="1" fill="#da70d6"/>
<rect x="1826" y="198.0" width="8" height="1" fill="#d05050"/>
<rect x="1834" y="198.0" width="2" height="1" fill="#da70d6"/>
<rect x="1797" y="200.0" width="1" height="1" fill="#da70d6"/>
<rect x="1798" y="200.0" width="1" height="1" fill="#ffd700"/>
<rect x="1799" y="200.0" width="1" height="1" fill="#8494b0"/>
<rect x="1797" y="204.0" width="2" height="1" fill="#3b4783"/>
<rect x="1800" y="204.0" width="5" height="1" fill="#3b4783"/>
<rect x="1806" y="204.0" width="4" height="1" fill="#3b4783"/>
<rect x="1811" y="204.0" width="3" height="1" fill="#3b4783"/>
<rect x="1797" y="206.0" width="1" height="1" fill="#e2cfa5"/>
<rect x="1798" y="206.0" width="1" height="1" fill="#da70d6"/>
<rect x="1799" y="206.0" width="11" height="1" fill="#2fa84a"/>
<rect x="1810" y="206.0" width="2" height="1" fill="#da70d6"/>
<rect x="1812" y="206.0" width="4" height="1" fill="#e2cfa5"/>
<rect x="1816" y="206.0" width="1" height="1" fill="#da70d6"/>
<rect x="1817" y="206.0" width="8" height="1" fill="#b070c8"/>
<rect x="1826" y="206.0" width="2" height="1" fill="#179fff"/>
<rect x="1829" y="206.0" width="1" height="1" fill="#179fff"/>
<rect x="1801" y="208.0" width="3" height="1" fill="#b070c8"/>
<rect x="1805" y="208.0" width="11" height="1" fill="#a9b7d6"/>
<rect x="1817" y="208.0" width="1" height="1" fill="#3f7fc0"/>
<rect x="1819" y="208.0" width="1" height="1" fill="#e2cfa5"/>
<rect x="1820" y="208.0" width="1" height="1" fill="#ffd700"/>
<rect x="1821" y="208.0" width="23" height="1" fill="#2fa84a"/>
<rect x="1844" y="208.0" width="1" height="1" fill="#ffd700"/>
<rect x="1805" y="210.0" width="1" height="1" fill="#8494b0"/>
<rect x="1806" y="210.0" width="3" height="1" fill="#e2cfa5"/>
<rect x="1809" y="210.0" width="1" height="1" fill="#ffd700"/>
<rect x="1810" y="210.0" width="8" height="1" fill="#b070c8"/>
<rect x="1819" y="210.0" width="2" height="1" fill="#da70d6"/>
<rect x="1822" y="210.0" width="1" height="1" fill="#da70d6"/>
<rect x="1809" y="212.0" width="6" height="1" fill="#3d6a96"/>
<rect x="1816" y="212.0" width="1" height="1" fill="#e2cfa5"/>
<rect x="1817" y="212.0" width="6" height="1" fill="#179fff"/>
<rect x="1823" y="212.0" width="1" height="1" fill="#8494b0"/>
<rect x="1824" y="212.0" width="4" height="1" fill="#e2cfa5"/>
<rect x="1828" y="212.0" width="1" height="1" fill="#179fff"/>
<rect x="1829" y="212.0" width="4" height="1" fill="#2fa84a"/>
<rect x="1833" y="212.0" width="2" height="1" fill="#179fff"/>
<rect x="1805" y="214.0" width="1" height="1" fill="#da70d6"/>
<rect x="1806" y="214.0" width="1" height="1" fill="#ffd700"/>
<rect x="1807" y="214.0" width="1" height="1" fill="#8494b0"/>
<rect x="1805" y="216.0" width="1" height="1" fill="#8494b0"/>
<rect x="1806" y="216.0" width="3" height="1" fill="#e2cfa5"/>
<rect x="1809" y="216.0" width="1" height="1" fill="#ffd700"/>
<rect x="1810" y="216.0" width="8" height="1" fill="#b070c8"/>
<rect x="1819" y="216.0" width="2" height="1" fill="#da70d6"/>
<rect x="1822" y="216.0" width="1" height="1" fill="#da70d6"/>
<rect x="1801" y="220.0" width="2" height="1" fill="#3d6a96"/>
<rect x="1804" y="220.0" width="1" height="1" fill="#ffd700"/>
<rect x="1805" y="220.0" width="19" height="1" fill="#a9b7d6"/>
<rect x="1824" y="220.0" width="1" height="1" fill="#ffd700"/>
<rect x="1826" y="220.0" width="1" height="1" fill="#ffd700"/>
<rect x="1805" y="222.0" width="4" height="1" fill="#a9b7d6"/>
<rect x="1809" y="222.0" width="1" height="1" fill="#8494b0"/>
<rect x="1810" y="222.0" width="4" height="1" fill="#e2cfa5"/>
<rect x="1814" y="222.0" width="1" height="1" fill="#da70d6"/>
<rect x="1809" y="224.0" width="8" height="1" fill="#2fa84a"/>
<rect x="1809" y="226.0" width="37" height="1" fill="#2fa84a"/>
<rect x="1809" y="228.0" width="10" height="1" fill="#2fa84a"/>
<rect x="1805" y="230.0" width="1" height="1" fill="#da70d6"/>
<rect x="1806" y="230.0" width="1" height="1" fill="#ffd700"/>
<rect x="1807" y="230.0" width="1" height="1" fill="#8494b0"/>
<rect x="1801" y="232.0" width="1" height="1" fill="#da70d6"/>
<rect x="1802" y="232.0" width="1" height="1" fill="#ffd700"/>
<rect x="1803" y="232.0" width="1" height="1" fill="#8494b0"/>
<rect x="1801" y="236.0" width="2" height="1" fill="#3b4783"/>
<rect x="1804" y="236.0" width="6" height="1" fill="#3b4783"/>
<rect x="1811" y="236.0" width="7" height="1" fill="#3b4783"/>
<rect x="1819" y="236.0" width="4" height="1" fill="#3b4783"/>
<rect x="1824" y="236.0" width="7" height="1" fill="#3b4783"/>
<rect x="1832" y="236.0" width="4" height="1" fill="#3b4783"/>
<rect x="1837" y="236.0" width="8" height="1" fill="#3b4783"/>
<rect x="1846" y="236.0" width="5" height="1" fill="#3b4783"/>
<rect x="1801" y="238.0" width="1" height="1" fill="#e2cfa5"/>
<rect x="1802" y="238.0" width="1" height="1" fill="#da70d6"/>
<rect x="1803" y="238.0" width="10" height="1" fill="#2fa84a"/>
<rect x="1813" y="238.0" width="2" height="1" fill="#da70d6"/>
<rect x="1815" y="238.0" width="2" height="1" fill="#e2cfa5"/>
<rect x="1817" y="238.0" width="1" height="1" fill="#da70d6"/>
<rect x="1818" y="238.0" width="9" height="1" fill="#2fa84a"/>
<rect x="1827" y="238.0" width="1" height="1" fill="#8494b0"/>
<rect x="1829" y="238.0" width="13" height="1" fill="#2fa84a"/>
<rect x="1842" y="238.0" width="1" height="1" fill="#8494b0"/>
<rect x="1844" y="238.0" width="8" height="1" fill="#b070c8"/>
<rect x="1853" y="238.0" width="2" height="1" fill="#179fff"/>
<rect x="1856" y="238.0" width="1" height="1" fill="#179fff"/>
<rect x="1801" y="242.0" width="2" height="1" fill="#3b4783"/>
<rect x="1804" y="242.0" width="8" height="1" fill="#3b4783"/>
<rect x="1813" y="242.0" width="4" height="1" fill="#3b4783"/>
<rect x="1818" y="242.0" width="8" height="1" fill="#3b4783"/>
<rect x="1801" y="244.0" width="1" height="1" fill="#e2cfa5"/>
<rect x="1802" y="244.0" width="1" height="1" fill="#da70d6"/>
<rect x="1803" y="244.0" width="10" height="1" fill="#2fa84a"/>
<rect x="1813" y="244.0" width="2" height="1" fill="#da70d6"/>
<rect x="1815" y="244.0" width="5" height="1" fill="#e2cfa5"/>
<rect x="1820" y="244.0" width="1" height="1" fill="#da70d6"/>
<rect x="1821" y="244.0" width="8" height="1" fill="#b070c8"/>
<rect x="1830" y="244.0" width="2" height="1" fill="#179fff"/>
<rect x="1833" y="244.0" width="1" height="1" fill="#179fff"/>
<rect x="1797" y="246.0" width="1" height="1" fill="#da70d6"/>
<rect x="1798" y="246.0" width="1" height="1" fill="#ffd700"/>
<rect x="1799" y="246.0" width="1" height="1" fill="#8494b0"/>
<rect x="1797" y="250.0" width="2" height="1" fill="#3b4783"/>
<rect x="1800" y="250.0" width="7" height="1" fill="#3b4783"/>
<rect x="1808" y="250.0" width="7" height="1" fill="#3b4783"/>
<rect x="1816" y="250.0" width="7" height="1" fill="#3b4783"/>
<rect x="1797" y="252.0" width="1" height="1" fill="#e2cfa5"/>
<rect x="1798" y="252.0" width="1" height="1" fill="#da70d6"/>
<rect x="1799" y="252.0" width="10" height="1" fill="#2fa84a"/>
<rect x="1809" y="252.0" width="2" height="1" fill="#da70d6"/>
<rect x="1811" y="252.0" width="2" height="1" fill="#e2cfa5"/>
<rect x="1813" y="252.0" width="1" height="1" fill="#da70d6"/>
<rect x="1814" y="252.0" width="9" height="1" fill="#2fa84a"/>
<rect x="1823" y="252.0" width="1" height="1" fill="#8494b0"/>
<rect x="1825" y="252.0" width="13" height="1" fill="#2fa84a"/>
<rect x="1838" y="252.0" width="1" height="1" fill="#8494b0"/>
<rect x="1840" y="252.0" width="8" height="1" fill="#b070c8"/>
<rect x="1849" y="252.0" width="2" height="1" fill="#179fff"/>
<rect x="1852" y="252.0" width="1" height="1" fill="#179fff"/>
<rect x="1801" y="254.0" width="1" height="1" fill="#e2cfa5"/>
<rect x="1802" y="254.0" width="1" height="1" fill="#da70d6"/>
<rect x="1803" y="254.0" width="16" height="1" fill="#2fa84a"/>
<rect x="1819" y="254.0" width="2" height="1" fill="#da70d6"/>
<rect x="1821" y="254.0" width="4" height="1" fill="#e2cfa5"/>
<rect x="1825" y="254.0" width="1" height="1" fill="#da70d6"/>
<rect x="1826" y="254.0" width="8" height="1" fill="#b070c8"/>
<rect x="1835" y="254.0" width="2" height="1" fill="#179fff"/>
<rect x="1838" y="254.0" width="1" height="1" fill="#179fff"/>
<rect x="1797" y="256.0" width="1" height="1" fill="#da70d6"/>
<rect x="1798" y="256.0" width="1" height="1" fill="#ffd700"/>
<rect x="1799" y="256.0" width="1" height="1" fill="#8494b0"/>
<rect x="1797" y="260.0" width="2" height="1" fill="#3b4783"/>
<rect x="1800" y="260.0" width="7" height="1" fill="#3b4783"/>
<rect x="1808" y="260.0" width="6" height="1" fill="#3b4783"/>
<rect x="1815" y="260.0" width="4" height="1" fill="#3b4783"/>
<rect x="1797" y="262.0" width="1" height="1" fill="#e2cfa5"/>
<rect x="1798" y="262.0" width="1" height="1" fill="#da70d6"/>
<rect x="1799" y="262.0" width="14" height="1" fill="#2fa84a"/>
<rect x="1813" y="262.0" width="2" height="1" fill="#da70d6"/>
<rect x="1815" y="262.0" width="5" height="1" fill="#e2cfa5"/>
<rect x="1820" y="262.0" width="1" height="1" fill="#da70d6"/>
<rect x="1821" y="262.0" width="8" height="1" fill="#b070c8"/>
<rect x="1830" y="262.0" width="2" height="1" fill="#179fff"/>
<rect x="1833" y="262.0" width="1" height="1" fill="#179fff"/>
<rect x="1801" y="264.0" width="3" height="1" fill="#b070c8"/>
<rect x="1805" y="264.0" width="11" height="1" fill="#a9b7d6"/>
<rect x="1817" y="264.0" width="1" height="1" fill="#3f7fc0"/>
<rect x="1819" y="264.0" width="1" height="1" fill="#e2cfa5"/>
<rect x="1820" y="264.0" width="1" height="1" fill="#ffd700"/>
<rect x="1821" y="264.0" width="14" height="1" fill="#2fa84a"/>
<rect x="1835" y="264.0" width="1" height="1" fill="#ffd700"/>
<rect x="1801" y="268.0" width="3" height="1" fill="#b070c8"/>
<rect x="1805" y="268.0" width="5" height="1" fill="#a9b7d6"/>
<rect x="1811" y="268.0" width="1" height="1" fill="#3f7fc0"/>
<rect x="1813" y="268.0" width="1" height="1" fill="#e2cfa5"/>
<rect x="1814" y="268.0" width="1" height="1" fill="#ffd700"/>
<rect x="1815" y="268.0" width="12" height="1" fill="#2fa84a"/>
<rect x="1827" y="268.0" width="2" height="1" fill="#ffd700"/>
<rect x="1829" y="268.0" width="4" height="1" fill="#e2cfa5"/>
<rect x="1833" y="268.0" width="3" height="1" fill="#ffd700"/>
<rect x="1801" y="270.0" width="3" height="1" fill="#b070c8"/>
<rect x="1805" y="270.0" width="5" height="1" fill="#a9b7d6"/>
<rect x="1811" y="270.0" width="1" height="1" fill="#3f7fc0"/>
<rect x="1813" y="270.0" width="1" height="1" fill="#e2cfa5"/>
<rect x="1814" y="270.0" width="1" height="1" fill="#ffd700"/>
<rect x="1815" y="270.0" width="11" height="1" fill="#2fa84a"/>
<rect x="1826" y="270.0" width="2" height="1" fill="#ffd700"/>
<rect x="1828" y="270.0" width="4" height="1" fill="#e2cfa5"/>
<rect x="1832" y="270.0" width="3" height="1" fill="#ffd700"/>
<rect x="1801" y="272.0" width="3" height="1" fill="#b070c8"/>
<rect x="1805" y="272.0" width="5" height="1" fill="#a9b7d6"/>
<rect x="1811" y="272.0" width="1" height="1" fill="#3f7fc0"/>
<rect x="1813" y="272.0" width="1" height="1" fill="#e2cfa5"/>
<rect x="1814" y="272.0" width="1" height="1" fill="#ffd700"/>
<rect x="1815" y="272.0" width="14" height="1" fill="#2fa84a"/>
<rect x="1829" y="272.0" width="2" height="1" fill="#ffd700"/>
<rect x="1831" y="272.0" width="4" height="1" fill="#e2cfa5"/>
<rect x="1835" y="272.0" width="3" height="1" fill="#ffd700"/>
<rect x="1801" y="276.0" width="2" height="1" fill="#3b4783"/>
<rect x="1804" y="276.0" width="5" height="1" fill="#3b4783"/>
<rect x="1810" y="276.0" width="6" height="1" fill="#3b4783"/>
<rect x="1817" y="276.0" width="3" height="1" fill="#3b4783"/>
<rect x="1821" y="276.0" width="3" height="1" fill="#3b4783"/>
<rect x="1825" y="276.0" width="8" height="1" fill="#3b4783"/>
<rect x="1834" y="276.0" width="3" height="1" fill="#3b4783"/>
<rect x="1838" y="276.0" width="4" height="1" fill="#3b4783"/>
<rect x="1801" y="278.0" width="1" height="1" fill="#2f8cff"/>
<rect x="1802" y="278.0" width="1" height="1" fill="#8494b0"/>
<rect x="1803" y="278.0" width="4" height="1" fill="#e2cfa5"/>
<rect x="1807" y="278.0" width="2" height="1" fill="#ffd700"/>
<rect x="1805" y="280.0" width="4" height="1" fill="#c5cee0"/>
<rect x="1809" y="280.0" width="1" height="1" fill="#8494b0"/>
<rect x="1811" y="280.0" width="5" height="1" fill="#2fa84a"/>
<rect x="1816" y="280.0" width="1" height="1" fill="#8494b0"/>
<rect x="1805" y="282.0" width="4" height="1" fill="#c5cee0"/>
<rect x="1809" y="282.0" width="1" height="1" fill="#8494b0"/>
<rect x="1811" y="282.0" width="1" height="1" fill="#179fff"/>
<rect x="1813" y="282.0" width="16" height="1" fill="#c5cee0"/>
<rect x="1830" y="282.0" width="13" height="1" fill="#2fa84a"/>
<rect x="1844" y="282.0" width="10" height="1" fill="#a9b7d6"/>
<rect x="1855" y="282.0" width="12" height="1" fill="#2fa84a"/>
<rect x="1801" y="286.0" width="1" height="1" fill="#2f8cff"/>
<rect x="1802" y="286.0" width="1" height="1" fill="#8494b0"/>
<rect x="1803" y="286.0" width="4" height="1" fill="#e2cfa5"/>
<rect x="1807" y="286.0" width="2" height="1" fill="#ffd700"/>
<rect x="1805" y="288.0" width="6" height="1" fill="#c5cee0"/>
<rect x="1811" y="288.0" width="1" height="1" fill="#8494b0"/>
<rect x="1813" y="288.0" width="8" height="1" fill="#2fa84a"/>
<rect x="1821" y="288.0" width="1" height="1" fill="#8494b0"/>
<rect x="1805" y="290.0" width="6" height="1" fill="#c5cee0"/>
<rect x="1811" y="290.0" width="1" height="1" fill="#8494b0"/>
<rect x="1813" y="290.0" width="8" height="1" fill="#2fa84a"/>
<rect x="1821" y="290.0" width="1" height="1" fill="#8494b0"/>
<rect x="1805" y="292.0" width="3" height="1" fill="#c5cee0"/>
<rect x="1808" y="292.0" width="1" height="1" fill="#8494b0"/>
<rect x="1810" y="292.0" width="9" height="1" fill="#2fa84a"/>
<rect x="1819" y="292.0" width="1" height="1" fill="#8494b0"/>
<rect x="1805" y="294.0" width="7" height="1" fill="#e2cfa5"/>
<rect x="1812" y="294.0" width="1" height="1" fill="#8494b0"/>
<rect x="1814" y="294.0" width="8" height="1" fill="#b070c8"/>
<rect x="1823" y="294.0" width="10" height="1" fill="#179fff"/>
<rect x="1834" y="294.0" width="1" height="1" fill="#179fff"/>
<rect x="1809" y="296.0" width="4" height="1" fill="#a9b7d6"/>
<rect x="1813" y="296.0" width="1" height="1" fill="#8494b0"/>
<rect x="1814" y="296.0" width="4" height="1" fill="#e2cfa5"/>
<rect x="1818" y="296.0" width="1" height="1" fill="#da70d6"/>
<rect x="1813" y="298.0" width="13" height="1" fill="#2fa84a"/>
<rect x="1813" y="300.0" width="33" height="1" fill="#2fa84a"/>
<rect x="1813" y="302.0" width="13" height="1" fill="#2fa84a"/>
<rect x="1809" y="304.0" width="1" height="1" fill="#da70d6"/>
<rect x="1810" y="304.0" width="1" height="1" fill="#ffd700"/>
<rect x="1811" y="304.0" width="1" height="1" fill="#8494b0"/>
<rect x="1809" y="308.0" width="1" height="1" fill="#e2cfa5"/>
<rect x="1810" y="308.0" width="1" height="1" fill="#da70d6"/>
<rect x="1811" y="308.0" width="12" height="1" fill="#2fa84a"/>
<rect x="1823" y="308.0" width="2" height="1" fill="#da70d6"/>
<rect x="1825" y="308.0" width="5" height="1" fill="#e2cfa5"/>
<rect x="1830" y="308.0" width="1" height="1" fill="#da70d6"/>
<rect x="1831" y="308.0" width="8" height="1" fill="#b070c8"/>
<rect x="1840" y="308.0" width="2" height="1" fill="#179fff"/>
<rect x="1843" y="308.0" width="1" height="1" fill="#179fff"/>
<rect x="1809" y="310.0" width="1" height="1" fill="#e2cfa5"/>
<rect x="1810" y="310.0" width="1" height="1" fill="#da70d6"/>
<rect x="1811" y="310.0" width="14" height="1" fill="#2fa84a"/>
<rect x="1825" y="310.0" width="1" height="1" fill="#da70d6"/>
<rect x="1826" y="310.0" width="1" height="1" fill="#8494b0"/>
<rect x="1827" y="310.0" width="3" height="1" fill="#e2cfa5"/>
<rect x="1830" y="310.0" width="3" height="1" fill="#da70d6"/>
<rect x="1833" y="310.0" width="1" height="1" fill="#8494b0"/>
<rect x="1835" y="310.0" width="2" height="1" fill="#3b4783"/>
<rect x="1838" y="310.0" width="5" height="1" fill="#3b4783"/>
<rect x="1844" y="310.0" width="3" height="1" fill="#3b4783"/>
<rect x="1848" y="310.0" width="4" height="1" fill="#3b4783"/>
<rect x="1805" y="312.0" width="1" height="1" fill="#da70d6"/>
<rect x="1806" y="312.0" width="1" height="1" fill="#ffd700"/>
<rect x="1807" y="312.0" width="1" height="1" fill="#8494b0"/>
<rect x="1805" y="314.0" width="7" height="1" fill="#e2cfa5"/>
<rect x="1812" y="314.0" width="1" height="1" fill="#8494b0"/>
<rect x="1814" y="314.0" width="8" height="1" fill="#b070c8"/>
<rect x="1823" y="314.0" width="10" height="1" fill="#179fff"/>
<rect x="1834" y="314.0" width="1" height="1" fill="#179fff"/>
<rect x="1809" y="316.0" width="4" height="1" fill="#a9b7d6"/>
<rect x="1813" y="316.0" width="1" height="1" fill="#8494b0"/>
<rect x="1814" y="316.0" width="4" height="1" fill="#e2cfa5"/>
<rect x="1818" y="316.0" width="1" height="1" fill="#da70d6"/>
<rect x="1813" y="318.0" width="8" height="1" fill="#2fa84a"/>
<rect x="1813" y="320.0" width="44" height="1" fill="#2fa84a"/>
<rect x="1813" y="322.0" width="10" height="1" fill="#2fa84a"/>
<rect x="1809" y="324.0" width="1" height="1" fill="#da70d6"/>
<rect x="1810" y="324.0" width="1" height="1" fill="#ffd700"/>
<rect x="1811" y="324.0" width="1" height="1" fill="#8494b0"/>
<rect x="1805" y="326.0" width="1" height="1" fill="#da70d6"/>
<rect x="1806" y="326.0" width="1" height="1" fill="#ffd700"/>
<rect x="1807" y="326.0" width="1" height="1" fill="#8494b0"/>
<rect x="1805" y="330.0" width="7" height="1" fill="#e2cfa5"/>
<rect x="1812" y="330.0" width="1" height="1" fill="#8494b0"/>
<rect x="1814" y="330.0" width="8" height="1" fill="#b070c8"/>
<rect x="1823" y="330.0" width="10" height="1" fill="#179fff"/>
<rect x="1834" y="330.0" width="1" height="1" fill="#179fff"/>
<rect x="1809" y="332.0" width="1" height="1" fill="#e2cfa5"/>
<rect x="1810" y="332.0" width="1" height="1" fill="#da70d6"/>
<rect x="1811" y="332.0" width="10" height="1" fill="#2fa84a"/>
<rect x="1821" y="332.0" width="2" height="1" fill="#da70d6"/>
<rect x="1823" y="332.0" width="2" height="1" fill="#e2cfa5"/>
<rect x="1825" y="332.0" width="1" height="1" fill="#da70d6"/>
<rect x="1826" y="332.0" width="9" height="1" fill="#2fa84a"/>
<rect x="1835" y="332.0" width="1" height="1" fill="#8494b0"/>
<rect x="1837" y="332.0" width="13" height="1" fill="#2fa84a"/>
<rect x="1850" y="332.0" width="1" height="1" fill="#8494b0"/>
<rect x="1852" y="332.0" width="8" height="1" fill="#b070c8"/>
<rect x="1861" y="332.0" width="2" height="1" fill="#179fff"/>
<rect x="1864" y="332.0" width="1" height="1" fill="#179fff"/>
<rect x="1805" y="334.0" width="1" height="1" fill="#da70d6"/>
<rect x="1806" y="334.0" width="1" height="1" fill="#ffd700"/>
<rect x="1807" y="334.0" width="1" height="1" fill="#8494b0"/>
<rect x="1801" y="336.0" width="1" height="1" fill="#da70d6"/>
<rect x="1802" y="336.0" width="1" height="1" fill="#ffd700"/>
<rect x="1803" y="336.0" width="1" height="1" fill="#8494b0"/>
<rect x="1797" y="338.0" width="1" height="1" fill="#da70d6"/>
<rect x="1798" y="338.0" width="1" height="1" fill="#ffd700"/>
<rect x="1799" y="338.0" width="1" height="1" fill="#8494b0"/>
<rect x="1801" y="350.0" width="1" height="1" fill="#179fff"/>
<rect x="1802" y="350.0" width="1" height="1" fill="#da70d6"/>
<rect x="1803" y="350.0" width="1" height="1" fill="#8494b0"/>
<rect x="1801" y="354.0" width="1" height="1" fill="#e2cfa5"/>
<rect x="1802" y="354.0" width="1" height="1" fill="#da70d6"/>
<rect x="1803" y="354.0" width="1" height="1" fill="#9aa5b8"/>
<rect x="1804" y="354.0" width="12" height="1" fill="#2fa84a"/>
<rect x="1816" y="354.0" width="1" height="1" fill="#9aa5b8"/>
<rect x="1817" y="354.0" width="1" height="1" fill="#da70d6"/>
<rect x="1818" y="354.0" width="1" height="1" fill="#8494b0"/>
<rect x="1819" y="354.0" width="5" height="1" fill="#e2cfa5"/>
<rect x="1824" y="354.0" width="1" height="1" fill="#da70d6"/>
<rect x="1825" y="354.0" width="8" height="1" fill="#b070c8"/>
<rect x="1834" y="354.0" width="2" height="1" fill="#179fff"/>
<rect x="1837" y="354.0" width="1" height="1" fill="#179fff"/>
<rect x="1805" y="356.0" width="3" height="1" fill="#b070c8"/>
<rect x="1809" y="356.0" width="11" height="1" fill="#a9b7d6"/>
<rect x="1821" y="356.0" width="1" height="1" fill="#3f7fc0"/>
<rect x="1823" y="356.0" width="1" height="1" fill="#e2cfa5"/>
<rect x="1824" y="356.0" width="1" height="1" fill="#ffd700"/>
<rect x="1825" y="356.0" width="1" height="1" fill="#9aa5b8"/>
<rect x="1826" y="356.0" width="21" height="1" fill="#2fa84a"/>
<rect x="1847" y="356.0" width="1" height="1" fill="#9aa5b8"/>
<rect x="1848" y="356.0" width="1" height="1" fill="#ffd700"/>
<rect x="1809" y="358.0" width="1" height="1" fill="#8494b0"/>
<rect x="1810" y="358.0" width="3" height="1" fill="#e2cfa5"/>
<rect x="1813" y="358.0" width="1" height="1" fill="#ffd700"/>
<rect x="1814" y="358.0" width="8" height="1" fill="#b070c8"/>
<rect x="1823" y="358.0" width="2" height="1" fill="#da70d6"/>
<rect x="1826" y="358.0" width="1" height="1" fill="#da70d6"/>
<rect x="1813" y="360.0" width="6" height="1" fill="#3d6a96"/>
<rect x="1820" y="360.0" width="1" height="1" fill="#e2cfa5"/>
<rect x="1821" y="360.0" width="1" height="1" fill="#179fff"/>
<rect x="1822" y="360.0" width="4" height="1" fill="#7fa6cf"/>
<rect x="1826" y="360.0" width="1" height="1" fill="#179fff"/>
<rect x="1827" y="360.0" width="1" height="1" fill="#8494b0"/>
<rect x="1828" y="360.0" width="4" height="1" fill="#e2cfa5"/>
<rect x="1832" y="360.0" width="1" height="1" fill="#179fff"/>
<rect x="1833" y="360.0" width="1" height="1" fill="#9aa5b8"/>
<rect x="1834" y="360.0" width="2" height="1" fill="#2fa84a"/>
<rect x="1836" y="360.0" width="1" height="1" fill="#9aa5b8"/>
<rect x="1837" y="360.0" width="1" height="1" fill="#179fff"/>
<rect x="1838" y="360.0" width="1" height="1" fill="#8494b0"/>
<rect x="1809" y="362.0" width="1" height="1" fill="#da70d6"/>
<rect x="1810" y="362.0" width="1" height="1" fill="#ffd700"/>
<rect x="1809" y="364.0" width="1" height="1" fill="#8494b0"/>
<rect x="1810" y="364.0" width="3" height="1" fill="#e2cfa5"/>
<rect x="1813" y="364.0" width="2" height="1" fill="#ffd700"/>
<rect x="1815" y="364.0" width="1" height="1" fill="#8494b0"/>
<rect x="1805" y="368.0" width="2" height="1" fill="#3d6a96"/>
<rect x="1808" y="368.0" width="1" height="1" fill="#ffd700"/>
<rect x="1809" y="368.0" width="1" height="1" fill="#3f7fc0"/>
<rect x="1810" y="368.0" width="11" height="1" fill="#a9b7d6"/>
<rect x="1821" y="368.0" width="1" height="1" fill="#8494b0"/>
<rect x="1822" y="368.0" width="6" height="1" fill="#a9b7d6"/>
<rect x="1828" y="368.0" width="1" height="1" fill="#ffd700"/>
<rect x="1830" y="368.0" width="1" height="1" fill="#ffd700"/>
<rect x="1809" y="370.0" width="6" height="1" fill="#3d6a96"/>
<rect x="1816" y="370.0" width="4" height="1" fill="#a9b7d6"/>
<rect x="1820" y="370.0" width="1" height="1" fill="#8494b0"/>
<rect x="1821" y="370.0" width="4" height="1" fill="#e2cfa5"/>
<rect x="1825" y="370.0" width="1" height="1" fill="#da70d6"/>
<rect x="1813" y="372.0" width="1" height="1" fill="#9aa5b8"/>
<rect x="1814" y="372.0" width="2" height="1" fill="#2fa84a"/>
<rect x="1817" y="372.0" width="6" height="1" fill="#2fa84a"/>
<rect x="1824" y="372.0" width="9" height="1" fill="#2fa84a"/>
<rect x="1833" y="372.0" width="1" height="1" fill="#9aa5b8"/>
<rect x="1834" y="372.0" width="1" height="1" fill="#8494b0"/>
<rect x="1813" y="374.0" width="1" height="1" fill="#9aa5b8"/>
<rect x="1814" y="374.0" width="6" height="1" fill="#2fa84a"/>
<rect x="1821" y="374.0" width="6" height="1" fill="#2fa84a"/>
<rect x="1828" y="374.0" width="2" height="1" fill="#2fa84a"/>
<rect x="1831" y="374.0" width="5" height="1" fill="#2fa84a"/>
<rect x="1837" y="374.0" width="3" height="1" fill="#2fa84a"/>
<rect x="1841" y="374.0" width="10" height="1" fill="#2fa84a"/>
<rect x="1851" y="374.0" width="1" height="1" fill="#9aa5b8"/>
<rect x="1852" y="374.0" width="1" height="1" fill="#8494b0"/>
<rect x="1813" y="376.0" width="1" height="1" fill="#9aa5b8"/>
<rect x="1814" y="376.0" width="7" height="1" fill="#2fa84a"/>
<rect x="1821" y="376.0" width="1" height="1" fill="#9aa5b8"/>
<rect x="1809" y="378.0" width="1" height="1" fill="#da70d6"/>
<rect x="1810" y="378.0" width="1" height="1" fill="#8494b0"/>
<rect x="1805" y="380.0" width="1" height="1" fill="#ffd700"/>
<rect x="1805" y="384.0" width="2" height="1" fill="#3b4783"/>
<rect x="1808" y="384.0" width="4" height="1" fill="#3b4783"/>
<rect x="1813" y="384.0" width="7" height="1" fill="#3b4783"/>
<rect x="1821" y="384.0" width="2" height="1" fill="#3b4783"/>
<rect x="1824" y="384.0" width="4" height="1" fill="#3b4783"/>
<rect x="1829" y="384.0" width="3" height="1" fill="#3b4783"/>
<rect x="1833" y="384.0" width="8" height="1" fill="#3b4783"/>
<rect x="1842" y="384.0" width="3" height="1" fill="#3b4783"/>
<rect x="1846" y="384.0" width="2" height="1" fill="#3b4783"/>
<rect x="1849" y="384.0" width="3" height="1" fill="#3b4783"/>
<rect x="1853" y="384.0" width="7" height="1" fill="#3b4783"/>
<rect x="1805" y="386.0" width="1" height="1" fill="#2f8cff"/>
<rect x="1806" y="386.0" width="1" height="1" fill="#8494b0"/>
<rect x="1807" y="386.0" width="4" height="1" fill="#e2cfa5"/>
<rect x="1811" y="386.0" width="1" height="1" fill="#ffd700"/>
<rect x="1812" y="386.0" width="1" height="1" fill="#da70d6"/>
<rect x="1809" y="388.0" width="3" height="1" fill="#c5cee0"/>
<rect x="1812" y="388.0" width="1" height="1" fill="#8494b0"/>
<rect x="1814" y="388.0" width="1" height="1" fill="#9aa5b8"/>
<rect x="1815" y="388.0" width="2" height="1" fill="#2fa84a"/>
<rect x="1818" y="388.0" width="12" height="1" fill="#2fa84a"/>
<rect x="1831" y="388.0" width="2" height="1" fill="#2fa84a"/>
<rect x="1833" y="388.0" width="1" height="1" fill="#9aa5b8"/>
<rect x="1834" y="388.0" width="1" height="1" fill="#8494b0"/>
<rect x="1809" y="390.0" width="4" height="1" fill="#c5cee0"/>
<rect x="1813" y="390.0" width="1" height="1" fill="#8494b0"/>
<rect x="1815" y="390.0" width="1" height="1" fill="#9aa5b8"/>
<rect x="1816" y="390.0" width="3" height="1" fill="#2fa84a"/>
<rect x="1819" y="390.0" width="1" height="1" fill="#9aa5b8"/>
<rect x="1820" y="390.0" width="1" height="1" fill="#8494b0"/>
<rect x="1809" y="392.0" width="4" height="1" fill="#c5cee0"/>
<rect x="1813" y="392.0" width="1" height="1" fill="#8494b0"/>
<rect x="1815" y="392.0" width="1" height="1" fill="#179fff"/>
<rect x="1817" y="392.0" width="3" height="1" fill="#c5cee0"/>
<rect x="1820" y="392.0" width="1" height="1" fill="#8494b0"/>
<rect x="1822" y="392.0" width="11" height="1" fill="#a9b7d6"/>
<rect x="1834" y="392.0" width="1" height="1" fill="#179fff"/>
<rect x="1835" y="392.0" width="1" height="1" fill="#8494b0"/>
<rect x="1809" y="394.0" width="7" height="1" fill="#e2cfa5"/>
<rect x="1816" y="394.0" width="1" height="1" fill="#8494b0"/>
<rect x="1818" y="394.0" width="8" height="1" fill="#b070c8"/>
<rect x="1827" y="394.0" width="1" height="1" fill="#179fff"/>
<rect x="1828" y="394.0" width="8" height="1" fill="#2f8cff"/>
<rect x="1836" y="394.0" width="1" height="1" fill="#179fff"/>
<rect x="1838" y="394.0" width="1" height="1" fill="#179fff"/>
<rect x="1813" y="396.0" width="2" height="1" fill="#3b4783"/>
<rect x="1816" y="396.0" width="7" height="1" fill="#3b4783"/>
<rect x="1824" y="396.0" width="3" height="1" fill="#3b4783"/>
<rect x="1828" y="396.0" width="8" height="1" fill="#3b4783"/>
<rect x="1837" y="396.0" width="2" height="1" fill="#3b4783"/>
<rect x="1840" y="396.0" width="3" height="1" fill="#3b4783"/>
<rect x="1844" y="396.0" width="8" height="1" fill="#3b4783"/>
<rect x="1853" y="396.0" width="2" height="1" fill="#3b4783"/>
<rect x="1856" y="396.0" width="10" height="1" fill="#3b4783"/>
<rect x="1813" y="398.0" width="2" height="1" fill="#3d6a96"/>
<rect x="1816" y="398.0" width="1" height="1" fill="#ffd700"/>
<rect x="1817" y="398.0" width="8" height="1" fill="#2f8cff"/>
<rect x="1825" y="398.0" width="1" height="1" fill="#8494b0"/>
<rect x="1826" y="398.0" width="7" height="1" fill="#a9b7d6"/>
<rect x="1833" y="398.0" width="1" height="1" fill="#ffd700"/>
<rect x="1835" y="398.0" width="1" height="1" fill="#ffd700"/>
<rect x="1817" y="400.0" width="6" height="1" fill="#c5cee0"/>
<rect x="1823" y="400.0" width="1" height="1" fill="#8494b0"/>
<rect x="1824" y="400.0" width="8" height="1" fill="#c5cee0"/>
<rect x="1832" y="400.0" width="1" height="1" fill="#8494b0"/>
<rect x="1833" y="400.0" width="4" height="1" fill="#c5cee0"/>
<rect x="1838" y="400.0" width="1" height="1" fill="#3f7fc0"/>
<rect x="1840" y="400.0" width="8" height="1" fill="#2f8cff"/>
<rect x="1848" y="400.0" width="1" height="1" fill="#8494b0"/>
<rect x="1849" y="400.0" width="7" height="1" fill="#c5cee0"/>
<rect x="1856" y="400.0" width="1" height="1" fill="#8494b0"/>
<rect x="1858" y="400.0" width="2" height="1" fill="#3b4783"/>
<rect x="1861" y="400.0" width="8" height="1" fill="#3b4783"/>
<rect x="1870" y="400.0" width="3" height="1" fill="#3b4783"/>
<rect x="1874" y="400.0" width="7" height="1" fill="#3b4783"/>
<rect x="1882" y="400.0" width="7" height="1" fill="#3b4783"/>
<rect x="1890" y="400.0" width="3" height="1" fill="#3b4783"/>
<rect x="1894" y="400.0" width="3" height="1" fill="#3b4783"/>
<rect x="1898" y="400.0" width="2" height="1" fill="#3b4783"/>
<rect x="1901" y="400.0" width="2" height="1" fill="#3b4783"/>
<rect x="1813" y="402.0" width="1" height="1" fill="#ffd700"/>
<rect x="1815" y="402.0" width="4" height="1" fill="#3d6a96"/>
<rect x="1820" y="402.0" width="1" height="1" fill="#ffd700"/>
<rect x="1817" y="404.0" width="4" height="1" fill="#a9b7d6"/>
<rect x="1821" y="404.0" width="1" height="1" fill="#8494b0"/>
<rect x="1822" y="404.0" width="4" height="1" fill="#e2cfa5"/>
<rect x="1826" y="404.0" width="1" height="1" fill="#da70d6"/>
<rect x="1821" y="406.0" width="1" height="1" fill="#9aa5b8"/>
<rect x="1822" y="406.0" width="5" height="1" fill="#2fa84a"/>
<rect x="1827" y="406.0" width="1" height="1" fill="#9aa5b8"/>
<rect x="1828" y="406.0" width="1" height="1" fill="#8494b0"/>
<rect x="1821" y="408.0" width="1" height="1" fill="#9aa5b8"/>
<rect x="1822" y="408.0" width="5" height="1" fill="#2fa84a"/>
<rect x="1828" y="408.0" width="3" height="1" fill="#2fa84a"/>
<rect x="1832" y="408.0" width="2" height="1" fill="#2fa84a"/>
<rect x="1835" y="408.0" width="5" height="1" fill="#2fa84a"/>
<rect x="1841" y="408.0" width="10" height="1" fill="#2fa84a"/>
<rect x="1852" y="408.0" width="3" height="1" fill="#2fa84a"/>
<rect x="1856" y="408.0" width="4" height="1" fill="#2fa84a"/>
<rect x="1860" y="408.0" width="1" height="1" fill="#9aa5b8"/>
<rect x="1861" y="408.0" width="1" height="1" fill="#8494b0"/>
<rect x="1821" y="410.0" width="1" height="1" fill="#9aa5b8"/>
<rect x="1822" y="410.0" width="5" height="1" fill="#2fa84a"/>
<rect x="1827" y="410.0" width="1" height="1" fill="#9aa5b8"/>
<rect x="1817" y="412.0" width="1" height="1" fill="#da70d6"/>
<rect x="1818" y="412.0" width="1" height="1" fill="#8494b0"/>
<rect x="1813" y="414.0" width="1" height="1" fill="#ffd700"/>
<rect x="1809" y="416.0" width="1" height="1" fill="#179fff"/>
<rect x="1810" y="416.0" width="1" height="1" fill="#8494b0"/>
<rect x="1809" y="418.0" width="5" height="1" fill="#e2cfa5"/>
<rect x="1814" y="418.0" width="1" height="1" fill="#8494b0"/>
<rect x="1816" y="418.0" width="8" height="1" fill="#b070c8"/>
<rect x="1825" y="418.0" width="2" height="1" fill="#179fff"/>
<rect x="1828" y="418.0" width="1" height="1" fill="#179fff"/>
<rect x="1813" y="420.0" width="4" height="1" fill="#a9b7d6"/>
<rect x="1817" y="420.0" width="1" height="1" fill="#8494b0"/>
<rect x="1818" y="420.0" width="4" height="1" fill="#e2cfa5"/>
<rect x="1822" y="420.0" width="1" height="1" fill="#ffd700"/>
<rect x="1817" y="422.0" width="1" height="1" fill="#9aa5b8"/>
<rect x="1818" y="422.0" width="5" height="1" fill="#2fa84a"/>
<rect x="1823" y="422.0" width="1" height="1" fill="#9aa5b8"/>
<rect x="1824" y="422.0" width="1" height="1" fill="#8494b0"/>
<rect x="1817" y="424.0" width="1" height="1" fill="#9aa5b8"/>
<rect x="1818" y="424.0" width="5" height="1" fill="#2fa84a"/>
<rect x="1824" y="424.0" width="3" height="1" fill="#2fa84a"/>
<rect x="1828" y="424.0" width="2" height="1" fill="#2fa84a"/>
<rect x="1831" y="424.0" width="5" height="1" fill="#2fa84a"/>
<rect x="1837" y="424.0" width="4" height="1" fill="#2fa84a"/>
<rect x="1842" y="424.0" width="3" height="1" fill="#2fa84a"/>
<rect x="1846" y="424.0" width="8" height="1" fill="#2fa84a"/>
<rect x="1854" y="424.0" width="1" height="1" fill="#9aa5b8"/>
<rect x="1855" y="424.0" width="1" height="1" fill="#8494b0"/>
<rect x="1817" y="426.0" width="1" height="1" fill="#9aa5b8"/>
<rect x="1818" y="426.0" width="5" height="1" fill="#2fa84a"/>
<rect x="1823" y="426.0" width="1" height="1" fill="#9aa5b8"/>
<rect x="1813" y="428.0" width="1" height="1" fill="#ffd700"/>
<rect x="1814" y="428.0" width="1" height="1" fill="#8494b0"/>
<rect x="1809" y="430.0" width="1" height="1" fill="#179fff"/>
<rect x="1810" y="430.0" width="1" height="1" fill="#8494b0"/>
<rect x="1805" y="432.0" width="1" height="1" fill="#da70d6"/>
<rect x="1806" y="432.0" width="1" height="1" fill="#ffd700"/>
<rect x="1807" y="432.0" width="1" height="1" fill="#8494b0"/>
<rect x="1801" y="434.0" width="1" height="1" fill="#179fff"/>
<rect x="1802" y="434.0" width="1" height="1" fill="#da70d6"/>
<rect x="1803" y="434.0" width="1" height="1" fill="#8494b0"/>
<rect x="1797" y="436.0" width="1" height="1" fill="#ffd700"/>
<rect x="1798" y="436.0" width="1" height="1" fill="#179fff"/>
<rect x="1799" y="436.0" width="1" height="1" fill="#8494b0"/>
<rect x="1793" y="438.0" width="2" height="1" fill="#da70d6"/>
<rect x="1795" y="438.0" width="2" height="1" fill="#ffd700"/>
<rect x="1797" y="438.0" width="3" height="1" fill="#8494b0"/>
</g>
<rect x="1813" y="353" width="3" height="2" fill="#e8a020"/>
<rect x="1849" y="399" width="3" height="2" fill="#e8a020"/>
<rect x="1856" y="407" width="3" height="2" fill="#e8a020"/>
<rect x="1807" y="345" width="4" height="2" fill="#e8a020"/>
<rect x="1803" y="347" width="4" height="2" fill="#e8a020"/>
<rect x="1816" y="369" width="4" height="2" fill="#58b0ff"/>
<rect x="1817" y="403" width="4" height="2" fill="#58b0ff"/>
<rect x="1813" y="419" width="4" height="2" fill="#58b0ff"/>
<rect x="1813" y="225" width="4" height="2" fill="#58b0ff"/>
<rect x="1813" y="299" width="4" height="2" fill="#58b0ff"/>
<rect x="1813" y="319" width="4" height="2" fill="#58b0ff"/>
<rect x="1903" y="159" width="1" height="894" fill="#182232"/>
<rect x="1904" y="638" width="16" height="193" fill="#171c2b"/>
<rect x="1915" y="269.2" width="5" height="6" fill="#3b9eff"/>
<rect x="1915" y="329" width="5" height="6" fill="#3b9eff"/>
<rect x="1915" y="511.5" width="5" height="6" fill="#3b9eff"/>
<rect x="1915" y="560.7" width="5" height="6" fill="#3b9eff"/>
<rect x="1910" y="627" width="5.500" height="9" fill="#a06a1a"/>
<rect x="1915" y="630.500" width="5" height="6" fill="#3b9eff"/>
<rect x="1910" y="644.8" width="5.500" height="6" fill="#4a3a2c"/>
<rect x="1910" y="729.3" width="5.500" height="6" fill="#4a3a2c"/>
<rect x="1910" y="748.6" width="5.500" height="6" fill="#4a3a2c"/>
<rect x="1910" y="768.7" width="5.500" height="6" fill="#4a3a2c"/>
<rect x="1915" y="675" width="5" height="6" fill="#2c4a7c"/>
<rect x="1915" y="758.5" width="5" height="6" fill="#2c4a7c"/>
<rect x="1915" y="807.8" width="5" height="6" fill="#2c4a7c"/>
<rect x="1904" y="729" width="16" height="1.500" fill="#8a7862"/>
</svg>
<div style="position:absolute;left:1265px;top:159px;width:503px;height:39.800px;background:#282644;border-radius:0 0 5px 5px;box-shadow:0 2px 8px rgba(0,0,0,.55)"></div>
<div style="position:absolute;left:1265px;top:159px;width:3px;height:39.8px;background:#4b4b4b;border-radius:0 0 0 5px;"></div>
<svg style="position:absolute;left:1265px;top:159px" width="503" height="40" viewBox="1265 159 503 40" fill="none" stroke="#c8ccd6" stroke-width="1.300"><path d="M1277.300 173.800 L1283.200 179.800 L1277.300 185.800" stroke-width="1.200"/><rect x="1290" y="163.200" width="268" height="29.600" rx="3" fill="#1a1f30" stroke="none"/><path d="M1508.200 182.600 V184.800 H1526.600 V182.600" stroke-width="1.200"/><rect x="1536" y="181.200" width="5" height="4.600" fill="#c5c8d0" stroke="none"/><path d="M1546.300 171.300 V180.900 M1542.200 173.700 L1550.400 178.500 M1550.400 173.700 L1542.200 178.500" stroke-width="1.300"/><path d="M1662 184.500 V171 M1656.200 176.800 L1662 171 L1667.800 176.800"/><path d="M1692.200 171 V184.500 M1686.400 178.700 L1692.200 184.500 L1698 178.700"/><path d="M1712.800 174.300 H1729.600 M1712.800 179.400 H1725.400 M1712.800 184.500 H1721.200"/><path d="M1745 174.500 L1755.400 184.900 M1755.400 174.500 L1745 184.900"/></svg>
<span id="t43" class="t ls" style="left:1299.00px;top:169.70px;font-size:15.6px;color:#bfc4cf;letter-spacing:0.771px;">pdf</span>
<span id="t44" class="t ls" style="left:1483.80px;top:170.80px;font-size:14.4px;color:#c5c8d0;letter-spacing:-1.655px;">Aa</span>
<span id="t45" class="t ls" style="left:1510.60px;top:169.20px;font-size:14.4px;color:#c5c8d0;letter-spacing:-1.358px;">ab</span>
<span id="t46" class="t ls" style="left:1564.30px;top:170.80px;font-size:14.4px;color:#c5c8d0;letter-spacing:-0.003px;">4 of 7</span>
<!-- p7_status -->
<div style="position:absolute;left:70px;top:1053px;width:1850px;height:27px;background:#0e162a;"></div>
<div style="position:absolute;left:70px;top:1053px;width:41px;height:27px;background:#0a62ad;"></div>
<div style="position:absolute;left:1214px;top:1053px;width:41px;height:27px;background:#0a62ad;"></div>
<svg style="position:absolute;left:70px;top:1053px" width="1850" height="27" viewBox="70 1053 1850 27" fill="none" stroke="#dde2ec" stroke-width="1.250" stroke-linejoin="round">
<path d="M85 1062.400 L90 1067.200 L85 1072 M95.800 1058.600 L91.300 1063 L95.800 1067.400" stroke="#fff" stroke-width="1.300"/>
<circle cx="122.500" cy="1059.600" r="2.100"/><circle cx="122.500" cy="1072.300" r="2.100"/><circle cx="130.300" cy="1063" r="2.100"/><path d="M122.500 1061.700 V1070.200 M130.300 1065.100 C130.300 1068.500 124.500 1067 122.800 1070"/>
<path d="M199.100 1064.800 A6.100 6.100 0 0 1 210.500 1063.300 M210.900 1067.200 A6.100 6.100 0 0 1 199.500 1068.700 M211.800 1059.700 L210.900 1063.800 L206.900 1062.700 M198.200 1072.300 L199.100 1068.200 L203.100 1069.300"/>
<circle cx="233.500" cy="1060.700" r="2.100"/><circle cx="233.500" cy="1071.300" r="2.100"/><circle cx="242.300" cy="1064.600" r="2.100"/><path d="M233.500 1062.800 V1069.200 M238.300 1058.500 V1073.500 M242.300 1066.700 C242.300 1069.500 240 1070 238.500 1070.500"/>
<path d="M281.300 1058.600 C276.500 1058.600 272.500 1061.500 270.300 1066 L274 1069.800 C278.500 1067.600 281.300 1063.500 281.300 1058.600 Z M270.500 1065.800 L267.300 1066.300 L267.300 1069 M274.200 1069.600 L273.800 1072.700 L271 1072.700 M267.300 1072.700 L270.200 1069.800"/><circle cx="276.300" cy="1063.600" r="1.300"/>
<path d="M284.800 1072.600 L287.500 1069.900 M295.200 1062.200 L297.800 1059.600 M288.600 1064.500 L293 1068.900 L290.800 1071 C289.600 1072.200 287.700 1072.200 286.500 1071 C285.300 1069.800 285.300 1067.900 286.500 1066.700 Z M291.200 1063.600 L294 1066.400 L296 1064.400 C297 1063.400 297 1061.800 296 1060.800 C295 1059.800 293.400 1059.800 292.400 1060.800 Z" stroke-width="1.150"/>
<circle cx="401.200" cy="1066" r="6.700"/><path d="M398.300 1063.100 L404.100 1068.900 M404.100 1063.100 L398.300 1068.900"/>
<path d="M433 1059.200 L440 1072.300 H426 Z M433 1063.600 V1068 M433 1069.400 V1070.800" stroke-width="1.200"/>
<circle cx="465" cy="1066" r="6.700"/><path d="M465 1064.800 V1069.600 M465 1062 V1063.400" stroke-width="1.350"/>
<path d="M528.700 1065.500 L525.600 1073 M528.700 1065.500 L531.800 1073 M526.700 1070.300 H530.700 M525.500 1061 C524.300 1062.700 524.300 1065.300 525.500 1067 M531.900 1061 C533.100 1062.700 533.100 1065.300 531.900 1067 M523.300 1059.300 C521 1062 521 1066 523.300 1068.700 M534.100 1059.300 C536.400 1062 536.400 1066 534.100 1068.700" stroke-width="1.150"/><circle cx="528.700" cy="1064" r="1.200"/>
<path d="M573.300 1065 V1059.200 L582.600 1065.500 L577 1069.300" stroke-width="1.200"/><ellipse cx="571.700" cy="1069.700" rx="2.400" ry="3" stroke-width="1.100"/><path d="M569.300 1068.300 L567.300 1067 M569.300 1070 H567 M569.400 1071.500 L567.400 1073 M574.100 1068.300 L576 1067 M574.100 1070 H576.300 M574 1071.500 L576 1073" stroke-width="0.900"/>
<circle cx="1233.300" cy="1065" r="5.300" stroke="#fff"/><path d="M1237.200 1069 L1242 1073.600 M1230.600 1065 H1236 M1233.300 1062.300 V1067.700" stroke="#fff"/>
<g fill="#f4f6fa" stroke="none"><rect x="1656.100" y="1060.900" width="13" height="4"/><rect x="1656.100" y="1060.900" width="4.200" height="5.900"/><rect x="1652" y="1067.100" width="4.100" height="3.700"/><rect x="1659.900" y="1067.100" width="9.200" height="3.700"/><rect x="1659.900" y="1067.100" width="4" height="6.100"/></g>
<path d="M1696 1060 C1693.500 1060 1692.300 1061.500 1692.500 1063 C1692.700 1064.200 1693.700 1064.700 1695 1064.600 M1692.500 1065.500 H1695.500 C1693.500 1066.500 1693 1068.500 1694.300 1069.500 H1692.300 V1071.800 H1700 C1702.500 1071.800 1703.800 1070 1703.300 1068 C1705.300 1067 1706.300 1064.500 1705 1062.300 C1704 1060.500 1701.500 1060.200 1700.300 1061.800 C1699.500 1060.500 1698 1059.800 1696 1060 Z M1700.300 1061.800 C1699.800 1063.500 1700.500 1065.500 1702 1066.500" stroke-width="1.150"/>
<path d="M1727.800 1067.300 L1731.600 1071.600 L1740.800 1060.300" stroke-width="1.350"/>
<path d="M1818.300 1067.500 C1820.500 1060.800 1829.500 1060.800 1831.700 1067.500" stroke-width="1.300"/><circle cx="1825" cy="1067.300" r="2.500" stroke-width="1.300"/>
<path d="M1889.500 1070.300 V1065.300 C1889.500 1058.300 1899.300 1058.300 1899.300 1065.300 V1070.300 L1900.800 1071.700 H1888 Z M1892.500 1071.900 C1892.500 1074.300 1896.300 1074.300 1896.300 1071.900" stroke-width="1.200"/><circle cx="1899.500" cy="1060.700" r="3.400" fill="#fff" stroke="none"/>
</svg>
<span id="t47" class="t ls" style="left:138.40px;top:1058.10px;font-size:14.4px;color:#dde2ec;letter-spacing:0.300px;">srushti*</span>
<span id="t48" class="t ls" style="left:303.80px;top:1058.10px;font-size:14.4px;color:#dde2ec;letter-spacing:-0.193px;">Launchpad</span>
<span id="t49" class="t ls" style="left:413.80px;top:1058.10px;font-size:14.4px;color:#dde2ec;letter-spacing:-1.016px;">0</span>
<span id="t50" class="t ls" style="left:445.50px;top:1058.10px;font-size:14.4px;color:#dde2ec;letter-spacing:-1.016px;">0</span>
<span id="t51" class="t ls" style="left:478.00px;top:1058.10px;font-size:14.4px;color:#dde2ec;letter-spacing:-0.672px;">185</span>
<span id="t52" class="t ls" style="left:541.30px;top:1058.10px;font-size:14.4px;color:#dde2ec;letter-spacing:-1.016px;">0</span>
<span id="t53" class="t ls" style="left:603.80px;top:1058.10px;font-size:14.4px;color:#dde2ec;letter-spacing:0.172px;">Generation completed.</span>
<span id="t54" class="t ls" style="left:1265.50px;top:1058.10px;font-size:14.4px;color:#dde2ec;letter-spacing:-0.295px;">Ln 239, Col 43</span>
<span id="t55" class="t ls" style="left:1375.00px;top:1058.10px;font-size:14.4px;color:#dde2ec;letter-spacing:-0.522px;">Spaces: 4</span>
<span id="t56" class="t ls" style="left:1454.30px;top:1058.10px;font-size:14.4px;color:#dde2ec;letter-spacing:-0.656px;">UTF-8</span>
<span id="t57" class="t ls" style="left:1511.80px;top:1058.10px;font-size:14.4px;color:#dde2ec;letter-spacing:-1.148px;">LF</span>
<span id="t58" class="t ls" style="left:1545.00px;top:1058.10px;font-size:14.4px;color:#dde2ec;letter-spacing:2.087px;">{}</span>
<span id="t59" class="t ls" style="left:1567.50px;top:1058.10px;font-size:14.4px;color:#dde2ec;letter-spacing:-0.039px;">JavaScript</span>
<span id="t60" class="t ls" style="left:1747.20px;top:1058.10px;font-size:14.4px;color:#dde2ec;letter-spacing:0.451px;">Prettier</span>
<span id="t61" class="t ls" style="left:1837.60px;top:1058.10px;font-size:14.4px;color:#dde2ec;letter-spacing:0.890px;">[off]</span>
</body></html>
